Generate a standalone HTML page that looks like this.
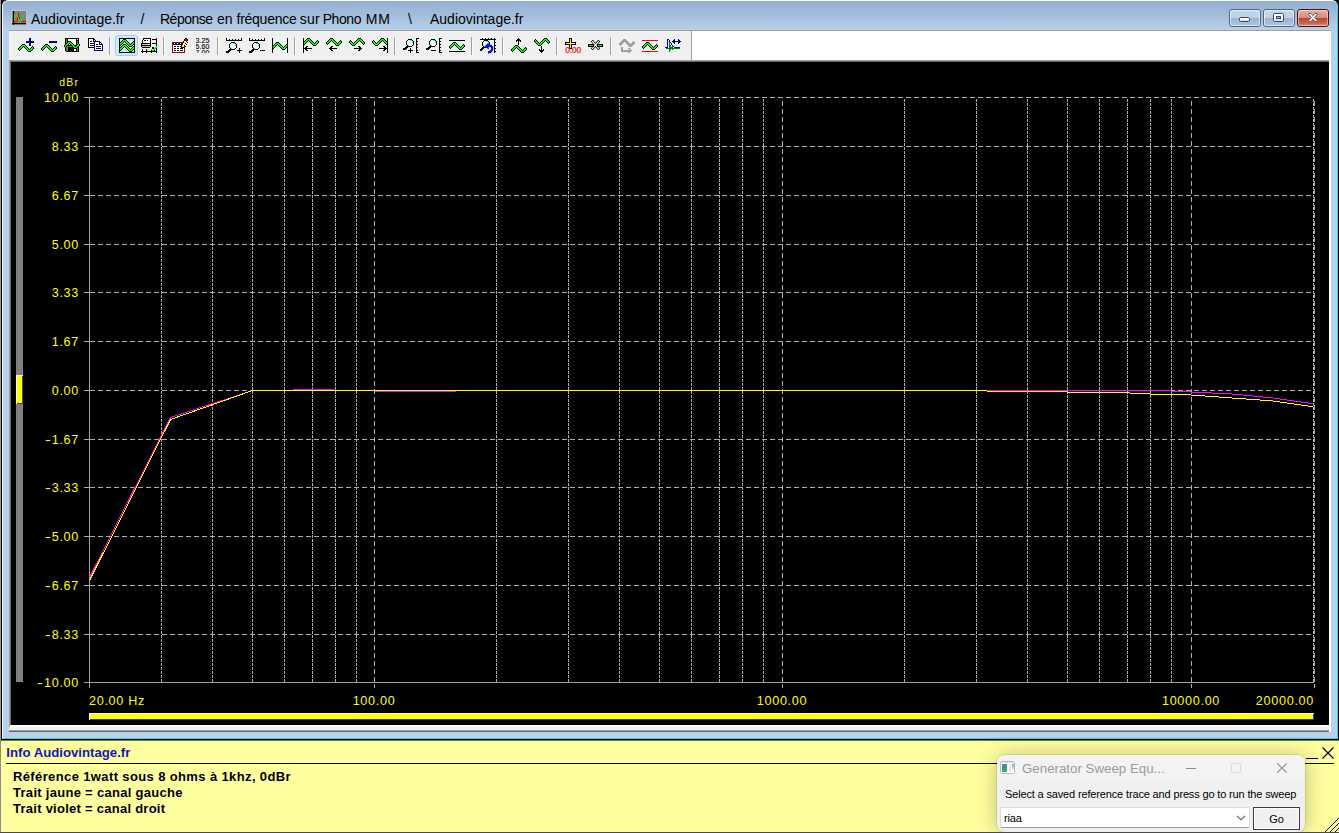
<!DOCTYPE html>
<html lang="fr">
<head>
<meta charset="utf-8">
<title>Audiovintage.fr / Réponse en fréquence sur Phono MM \ Audiovintage.fr</title>
<style>
html,body{margin:0;padding:0;}
body{width:1339px;height:833px;overflow:hidden;position:relative;background:#ffffa0;font-family:"Liberation Sans",sans-serif;}
.abs{position:absolute;}
#winbg{position:absolute;left:0;top:0;width:1339px;height:740px;background:#000;}
#winedgeL{position:absolute;left:0;top:0;width:1px;height:740px;background:#9a9a9a;}
#topwhite{display:none}
#frame{display:none}
#frame2{position:absolute;left:2px;top:0;width:1336px;height:739px;box-sizing:border-box;background:#b9d1ea;border-radius:6px 6px 0 0;border-left:1px solid #f6fafd;border-top:1px solid #fdfeff;border-right:1px solid #35d4ee;border-bottom:1px solid #35d4ee;}
#frame3{display:none}
#titlegrad{position:absolute;left:3px;top:1px;width:1334px;height:30px;background:linear-gradient(#94afd1 0%,#a2bcdb 45%,#b9d1ea 100%);border-radius:5px 5px 0 0;}
.tt{position:absolute;top:9px;height:20px;line-height:20px;font-size:14px;color:#000;white-space:pre;}
#tbline{position:absolute;left:9px;top:30px;width:1322px;height:1px;background:#a0a0a0;}
#toolbar{position:absolute;left:9px;top:31px;width:682px;height:30px;background:#f0f0f0;}
#tbend{position:absolute;left:691px;top:31px;width:1px;height:30px;background:#a0a0a0;}
#tbwhite{position:absolute;left:692px;top:31px;width:639px;height:31px;background:#fff;}
#chartedge{position:absolute;left:9px;top:60px;width:1322px;height:672px;box-sizing:border-box;background:#fff;}
#chart{position:absolute;left:11px;top:62px;width:1318px;height:663px;background:#000;}
.yl{position:absolute;left:19px;width:60px;text-align:right;color:#ffff00;font-size:12.6px;line-height:14px;height:14px;letter-spacing:0.7px;white-space:pre;}
.xl{position:absolute;top:694px;color:#ffff00;font-size:12.6px;line-height:14px;height:14px;letter-spacing:0.7px;white-space:pre;}
#info{position:absolute;left:1px;top:740px;width:1338px;height:93px;background:#ffffa0;}
#infoL{position:absolute;left:0;top:740px;width:1px;height:93px;background:#8c8c8c;}
.il{position:absolute;left:13px;font-weight:bold;font-size:13px;line-height:16px;color:#000;letter-spacing:0.55px;white-space:pre;}
#pop{position:absolute;left:997px;top:755px;width:308px;height:77px;background:#f0f0f0;border-radius:8px;box-shadow:0 0 0 1px rgba(110,110,60,0.16),0 1px 22px rgba(0,0,0,0.27);overflow:hidden;}
#botline{position:absolute;left:0;top:832px;width:1339px;height:1px;background:#4a4a4a;}
</style>
</head>
<body>
<div id="winbg"></div>
<div id="winedgeL"></div>
<div id="topwhite"></div>
<div id="frame"></div>
<div id="frame2"></div>
<div id="frame3"></div>
<div id="titlegrad"></div>
<svg class="abs" style="left:0;top:0" width="1339" height="32" shape-rendering="crispEdges"><rect x="11" y="10" width="16" height="1" fill="#c3c3c3"/><rect x="11" y="11" width="1" height="1" fill="#c3c3c3"/><rect x="12" y="11" width="1" height="1" fill="#808080"/><rect x="13" y="11" width="1" height="1" fill="#000"/><rect x="14" y="11" width="12" height="1" fill="#808080"/><rect x="26" y="11" width="1" height="1" fill="#c3c3c3"/><rect x="11" y="12" width="1" height="1" fill="#c3c3c3"/><rect x="12" y="12" width="1" height="1" fill="#808080"/><rect x="13" y="12" width="1" height="1" fill="#000"/><rect x="14" y="12" width="12" height="1" fill="#808080"/><rect x="26" y="12" width="1" height="1" fill="#c3c3c3"/><rect x="11" y="13" width="1" height="1" fill="#c3c3c3"/><rect x="12" y="13" width="1" height="1" fill="#808080"/><rect x="13" y="13" width="1" height="1" fill="#000"/><rect x="14" y="13" width="4" height="1" fill="#808080"/><rect x="18" y="13" width="1" height="1" fill="#ff0000"/><rect x="19" y="13" width="7" height="1" fill="#808080"/><rect x="26" y="13" width="1" height="1" fill="#c3c3c3"/><rect x="11" y="14" width="1" height="1" fill="#c3c3c3"/><rect x="12" y="14" width="1" height="1" fill="#808080"/><rect x="13" y="14" width="1" height="1" fill="#000"/><rect x="14" y="14" width="2" height="1" fill="#808080"/><rect x="16" y="14" width="1" height="1" fill="#00ff00"/><rect x="17" y="14" width="1" height="1" fill="#808080"/><rect x="18" y="14" width="1" height="1" fill="#ff0000"/><rect x="19" y="14" width="5" height="1" fill="#808080"/><rect x="24" y="14" width="1" height="1" fill="#00ff00"/><rect x="25" y="14" width="1" height="1" fill="#808080"/><rect x="26" y="14" width="1" height="1" fill="#c3c3c3"/><rect x="11" y="15" width="1" height="1" fill="#c3c3c3"/><rect x="12" y="15" width="1" height="1" fill="#808080"/><rect x="13" y="15" width="1" height="1" fill="#000"/><rect x="14" y="15" width="1" height="1" fill="#808080"/><rect x="15" y="15" width="1" height="1" fill="#00ff00"/><rect x="16" y="15" width="1" height="1" fill="#808080"/><rect x="17" y="15" width="1" height="1" fill="#00ff00"/><rect x="18" y="15" width="1" height="1" fill="#ff0000"/><rect x="19" y="15" width="4" height="1" fill="#808080"/><rect x="23" y="15" width="1" height="1" fill="#00ff00"/><rect x="24" y="15" width="2" height="1" fill="#808080"/><rect x="26" y="15" width="1" height="1" fill="#c3c3c3"/><rect x="11" y="16" width="1" height="1" fill="#c3c3c3"/><rect x="12" y="16" width="1" height="1" fill="#808080"/><rect x="13" y="16" width="1" height="1" fill="#000"/><rect x="14" y="16" width="1" height="1" fill="#808080"/><rect x="15" y="16" width="1" height="1" fill="#00ff00"/><rect x="16" y="16" width="1" height="1" fill="#808080"/><rect x="17" y="16" width="1" height="1" fill="#00ff00"/><rect x="18" y="16" width="1" height="1" fill="#ff0000"/><rect x="19" y="16" width="4" height="1" fill="#808080"/><rect x="23" y="16" width="1" height="1" fill="#00ff00"/><rect x="24" y="16" width="2" height="1" fill="#808080"/><rect x="26" y="16" width="1" height="1" fill="#c3c3c3"/><rect x="11" y="17" width="1" height="1" fill="#c3c3c3"/><rect x="12" y="17" width="1" height="1" fill="#808080"/><rect x="13" y="17" width="1" height="1" fill="#000"/><rect x="14" y="17" width="1" height="1" fill="#00ff00"/><rect x="15" y="17" width="2" height="1" fill="#808080"/><rect x="17" y="17" width="1" height="1" fill="#ff0000"/><rect x="18" y="17" width="1" height="1" fill="#00ff00"/><rect x="19" y="17" width="1" height="1" fill="#ff0000"/><rect x="20" y="17" width="2" height="1" fill="#808080"/><rect x="22" y="17" width="1" height="1" fill="#00ff00"/><rect x="23" y="17" width="3" height="1" fill="#808080"/><rect x="26" y="17" width="1" height="1" fill="#c3c3c3"/><rect x="11" y="18" width="1" height="1" fill="#c3c3c3"/><rect x="12" y="18" width="1" height="1" fill="#808080"/><rect x="13" y="18" width="1" height="1" fill="#000"/><rect x="14" y="18" width="1" height="1" fill="#00ff00"/><rect x="15" y="18" width="2" height="1" fill="#808080"/><rect x="17" y="18" width="1" height="1" fill="#ff0000"/><rect x="18" y="18" width="1" height="1" fill="#00ff00"/><rect x="19" y="18" width="1" height="1" fill="#ff0000"/><rect x="20" y="18" width="2" height="1" fill="#808080"/><rect x="22" y="18" width="1" height="1" fill="#00ff00"/><rect x="23" y="18" width="3" height="1" fill="#808080"/><rect x="26" y="18" width="1" height="1" fill="#c3c3c3"/><rect x="11" y="19" width="1" height="1" fill="#c3c3c3"/><rect x="12" y="19" width="1" height="1" fill="#808080"/><rect x="13" y="19" width="1" height="1" fill="#000"/><rect x="14" y="19" width="3" height="1" fill="#808080"/><rect x="17" y="19" width="1" height="1" fill="#ff0000"/><rect x="18" y="19" width="1" height="1" fill="#808080"/><rect x="19" y="19" width="1" height="1" fill="#00ff00"/><rect x="20" y="19" width="1" height="1" fill="#808080"/><rect x="21" y="19" width="1" height="1" fill="#00ff00"/><rect x="22" y="19" width="4" height="1" fill="#808080"/><rect x="26" y="19" width="1" height="1" fill="#c3c3c3"/><rect x="11" y="20" width="1" height="1" fill="#c3c3c3"/><rect x="12" y="20" width="1" height="1" fill="#808080"/><rect x="13" y="20" width="1" height="1" fill="#000"/><rect x="14" y="20" width="3" height="1" fill="#808080"/><rect x="17" y="20" width="1" height="1" fill="#ff0000"/><rect x="18" y="20" width="1" height="1" fill="#808080"/><rect x="19" y="20" width="1" height="1" fill="#00ff00"/><rect x="20" y="20" width="1" height="1" fill="#808080"/><rect x="21" y="20" width="1" height="1" fill="#00ff00"/><rect x="22" y="20" width="4" height="1" fill="#808080"/><rect x="26" y="20" width="1" height="1" fill="#c3c3c3"/><rect x="11" y="21" width="1" height="1" fill="#c3c3c3"/><rect x="12" y="21" width="1" height="1" fill="#808080"/><rect x="13" y="21" width="1" height="1" fill="#000"/><rect x="14" y="21" width="3" height="1" fill="#ff0000"/><rect x="17" y="21" width="3" height="1" fill="#808080"/><rect x="20" y="21" width="1" height="1" fill="#00ff00"/><rect x="21" y="21" width="5" height="1" fill="#ff0000"/><rect x="26" y="21" width="1" height="1" fill="#c3c3c3"/><rect x="11" y="22" width="1" height="1" fill="#c3c3c3"/><rect x="12" y="22" width="1" height="1" fill="#808080"/><rect x="13" y="22" width="1" height="1" fill="#000"/><rect x="14" y="22" width="12" height="1" fill="#808080"/><rect x="26" y="22" width="1" height="1" fill="#c3c3c3"/><rect x="11" y="23" width="1" height="1" fill="#c3c3c3"/><rect x="12" y="23" width="14" height="1" fill="#000"/><rect x="26" y="23" width="1" height="1" fill="#c3c3c3"/><rect x="11" y="24" width="1" height="1" fill="#c3c3c3"/><rect x="12" y="24" width="1" height="1" fill="#808080"/><rect x="13" y="24" width="1" height="1" fill="#000"/><rect x="14" y="24" width="12" height="1" fill="#808080"/><rect x="26" y="24" width="1" height="1" fill="#c3c3c3"/><rect x="11" y="25" width="16" height="1" fill="#c3c3c3"/></svg>
<div class="tt" id="t1" style="left:31px">Audiovintage.fr</div>
<div class="tt" id="t2" style="left:140.5px">/</div>
<div class="tt" id="t3" style="left:0;width:420px"><span style="position:absolute;left:160.0px;top:0;letter-spacing:-0.5px">Réponse</span> <span style="position:absolute;left:216.9px;top:0;letter-spacing:0px">en</span> <span style="position:absolute;left:236.5px;top:0;letter-spacing:-0.25px">fréquence</span> <span style="position:absolute;left:299.7px;top:0;letter-spacing:0.27px">sur</span> <span style="position:absolute;left:322.7px;top:0;letter-spacing:-0.42px">Phono</span> <span style="position:absolute;left:365.7px;top:0;letter-spacing:0.85px">MM</span></div>
<div class="tt" id="t4" style="left:408px">\</div>
<div class="tt" id="t5" style="left:430px">Audiovintage.fr</div>
<div style="position:absolute;top:9px;width:32px;height:18px;box-sizing:border-box;border:1px solid #54657f;border-radius:3px;left:1229px;background:linear-gradient(#c3d6ec 0%,#bdd2ea 47%,#9cb6d5 50%,#a9c3e1 100%);"><div style="position:absolute;left:0;top:0;right:0;bottom:0;border:1px solid rgba(255,255,255,0.55);border-radius:2px;"></div></div>
<div style="position:absolute;top:9px;width:32px;height:18px;box-sizing:border-box;border:1px solid #54657f;border-radius:3px;left:1263px;background:linear-gradient(#c3d6ec 0%,#bdd2ea 47%,#9cb6d5 50%,#a9c3e1 100%);"><div style="position:absolute;left:0;top:0;right:0;bottom:0;border:1px solid rgba(255,255,255,0.55);border-radius:2px;"></div></div>
<div style="position:absolute;top:9px;width:32px;height:18px;box-sizing:border-box;border:1px solid #54657f;border-radius:3px;left:1297px;border-color:#47141b;background:linear-gradient(#e9b3a5 0%,#d98c79 47%,#c0412a 50%,#cc6a52 85%,#d9907a 100%);"><div style="position:absolute;left:0;top:0;right:0;bottom:0;border:1px solid rgba(255,255,255,0.55);border-radius:2px;border-color:rgba(255,220,210,0.55)"></div></div>
<svg class="abs" style="left:0;top:0" width="1339" height="32">
<rect x="1239.5" y="17.5" width="10" height="4" rx="1" fill="#fff" stroke="#3d4962" stroke-width="1"/>
<rect x="1240" y="20" width="9" height="1" fill="#dcdcdc"/>
<rect x="1273.5" y="13.5" width="10" height="8" rx="1" fill="#fff" stroke="#3d4962" stroke-width="1"/>
<rect x="1274" y="19" width="9" height="2" fill="#e4e4e4"/>
<rect x="1276.5" y="16.5" width="4" height="2" fill="#9cc0e8" stroke="#3d4962" stroke-width="1"/>
<path d="M1308.5 13.5 L1311 13.5 L1313 15.7 L1315 13.5 L1317.5 13.5 L1317.5 14.3 L1314.7 17.5 L1317.5 20.7 L1317.5 21.5 L1315 21.5 L1313 19.3 L1311 21.5 L1308.5 21.5 L1308.5 20.7 L1311.3 17.5 L1308.5 14.3 Z" fill="#fff" stroke="#5a5e72" stroke-width="1" stroke-linejoin="round"/>
</svg>
<div id="tbline"></div>
<div id="toolbar"></div>
<div id="tbend"></div>
<div id="tbwhite"></div>
<svg class="abs" style="left:0;top:0" width="700" height="62" viewBox="0 0 700 62" shape-rendering="crispEdges"><rect x="109" y="37" width="1" height="18" fill="#a0a0a0"/><rect x="110" y="37" width="1" height="18" fill="#fafafa"/>
<rect x="163" y="37" width="1" height="18" fill="#a0a0a0"/><rect x="164" y="37" width="1" height="18" fill="#fafafa"/>
<rect x="217" y="37" width="1" height="18" fill="#a0a0a0"/><rect x="218" y="37" width="1" height="18" fill="#fafafa"/>
<rect x="294" y="37" width="1" height="18" fill="#a0a0a0"/><rect x="295" y="37" width="1" height="18" fill="#fafafa"/>
<rect x="394" y="37" width="1" height="18" fill="#a0a0a0"/><rect x="395" y="37" width="1" height="18" fill="#fafafa"/>
<rect x="471" y="37" width="1" height="18" fill="#a0a0a0"/><rect x="472" y="37" width="1" height="18" fill="#fafafa"/>
<rect x="502" y="37" width="1" height="18" fill="#a0a0a0"/><rect x="503" y="37" width="1" height="18" fill="#fafafa"/>
<rect x="556" y="37" width="1" height="18" fill="#a0a0a0"/><rect x="557" y="37" width="1" height="18" fill="#fafafa"/>
<rect x="610" y="37" width="1" height="18" fill="#a0a0a0"/><rect x="611" y="37" width="1" height="18" fill="#fafafa"/>
<rect x="22" y="44" width="3" height="1" fill="#000"/><rect x="21" y="45" width="1" height="1" fill="#000"/><rect x="22" y="45" width="3" height="1" fill="#00ff00"/><rect x="25" y="45" width="1" height="1" fill="#000"/><rect x="20" y="46" width="1" height="1" fill="#000"/><rect x="21" y="46" width="2" height="1" fill="#00ff00"/><rect x="23" y="46" width="1" height="1" fill="#000"/><rect x="24" y="46" width="2" height="1" fill="#00ff00"/><rect x="26" y="46" width="1" height="1" fill="#000"/><rect x="32" y="46" width="1" height="1" fill="#000"/><rect x="19" y="47" width="1" height="1" fill="#000"/><rect x="20" y="47" width="2" height="1" fill="#00ff00"/><rect x="22" y="47" width="1" height="1" fill="#000"/><rect x="24" y="47" width="1" height="1" fill="#000"/><rect x="25" y="47" width="2" height="1" fill="#00ff00"/><rect x="27" y="47" width="1" height="1" fill="#000"/><rect x="31" y="47" width="1" height="1" fill="#000"/><rect x="32" y="47" width="1" height="1" fill="#00ff00"/><rect x="33" y="47" width="1" height="1" fill="#000"/><rect x="18" y="48" width="1" height="1" fill="#000"/><rect x="19" y="48" width="2" height="1" fill="#00ff00"/><rect x="21" y="48" width="1" height="1" fill="#000"/><rect x="25" y="48" width="1" height="1" fill="#000"/><rect x="26" y="48" width="2" height="1" fill="#00ff00"/><rect x="28" y="48" width="1" height="1" fill="#000"/><rect x="30" y="48" width="1" height="1" fill="#000"/><rect x="31" y="48" width="2" height="1" fill="#00ff00"/><rect x="33" y="48" width="1" height="1" fill="#000"/><rect x="18" y="49" width="1" height="1" fill="#000"/><rect x="19" y="49" width="1" height="1" fill="#00ff00"/><rect x="20" y="49" width="1" height="1" fill="#000"/><rect x="26" y="49" width="1" height="1" fill="#000"/><rect x="27" y="49" width="2" height="1" fill="#00ff00"/><rect x="29" y="49" width="1" height="1" fill="#000"/><rect x="30" y="49" width="2" height="1" fill="#00ff00"/><rect x="32" y="49" width="1" height="1" fill="#000"/><rect x="19" y="50" width="1" height="1" fill="#000"/><rect x="27" y="50" width="1" height="1" fill="#000"/><rect x="28" y="50" width="3" height="1" fill="#00ff00"/><rect x="31" y="50" width="1" height="1" fill="#000"/><rect x="28" y="51" width="3" height="1" fill="#000"/>
<rect x="29" y="38" width="1" height="1" fill="#0000ff"/><rect x="30" y="38" width="1" height="1" fill="#000"/><rect x="29" y="39" width="1" height="1" fill="#0000ff"/><rect x="30" y="39" width="1" height="1" fill="#000"/><rect x="29" y="40" width="1" height="1" fill="#0000ff"/><rect x="30" y="40" width="1" height="1" fill="#000"/><rect x="26" y="41" width="7" height="1" fill="#0000ff"/><rect x="33" y="41" width="1" height="1" fill="#000"/><rect x="26" y="42" width="3" height="1" fill="#000"/><rect x="29" y="42" width="1" height="1" fill="#0000ff"/><rect x="30" y="42" width="4" height="1" fill="#000"/><rect x="29" y="43" width="1" height="1" fill="#0000ff"/><rect x="30" y="43" width="1" height="1" fill="#000"/><rect x="29" y="44" width="1" height="1" fill="#0000ff"/><rect x="30" y="44" width="1" height="1" fill="#000"/><rect x="29" y="45" width="2" height="1" fill="#000"/>
<rect x="45" y="44" width="3" height="1" fill="#000"/><rect x="44" y="45" width="1" height="1" fill="#000"/><rect x="45" y="45" width="3" height="1" fill="#00ff00"/><rect x="48" y="45" width="1" height="1" fill="#000"/><rect x="43" y="46" width="1" height="1" fill="#000"/><rect x="44" y="46" width="2" height="1" fill="#00ff00"/><rect x="46" y="46" width="1" height="1" fill="#000"/><rect x="47" y="46" width="2" height="1" fill="#00ff00"/><rect x="49" y="46" width="1" height="1" fill="#000"/><rect x="55" y="46" width="1" height="1" fill="#000"/><rect x="42" y="47" width="1" height="1" fill="#000"/><rect x="43" y="47" width="2" height="1" fill="#00ff00"/><rect x="45" y="47" width="1" height="1" fill="#000"/><rect x="47" y="47" width="1" height="1" fill="#000"/><rect x="48" y="47" width="2" height="1" fill="#00ff00"/><rect x="50" y="47" width="1" height="1" fill="#000"/><rect x="54" y="47" width="1" height="1" fill="#000"/><rect x="55" y="47" width="1" height="1" fill="#00ff00"/><rect x="56" y="47" width="1" height="1" fill="#000"/><rect x="41" y="48" width="1" height="1" fill="#000"/><rect x="42" y="48" width="2" height="1" fill="#00ff00"/><rect x="44" y="48" width="1" height="1" fill="#000"/><rect x="48" y="48" width="1" height="1" fill="#000"/><rect x="49" y="48" width="2" height="1" fill="#00ff00"/><rect x="51" y="48" width="1" height="1" fill="#000"/><rect x="53" y="48" width="1" height="1" fill="#000"/><rect x="54" y="48" width="2" height="1" fill="#00ff00"/><rect x="56" y="48" width="1" height="1" fill="#000"/><rect x="41" y="49" width="1" height="1" fill="#000"/><rect x="42" y="49" width="1" height="1" fill="#00ff00"/><rect x="43" y="49" width="1" height="1" fill="#000"/><rect x="49" y="49" width="1" height="1" fill="#000"/><rect x="50" y="49" width="2" height="1" fill="#00ff00"/><rect x="52" y="49" width="1" height="1" fill="#000"/><rect x="53" y="49" width="2" height="1" fill="#00ff00"/><rect x="55" y="49" width="1" height="1" fill="#000"/><rect x="42" y="50" width="1" height="1" fill="#000"/><rect x="50" y="50" width="1" height="1" fill="#000"/><rect x="51" y="50" width="3" height="1" fill="#00ff00"/><rect x="54" y="50" width="1" height="1" fill="#000"/><rect x="51" y="51" width="3" height="1" fill="#000"/>
<rect x="49" y="41" width="7" height="1" fill="#0000ff"/><rect x="56" y="41" width="1" height="1" fill="#000"/><rect x="49" y="42" width="8" height="1" fill="#000"/>
<rect x="65" y="38" width="14" height="1" fill="#000"/><rect x="65" y="39" width="1" height="1" fill="#000"/><rect x="66" y="39" width="1" height="1" fill="#808000"/><rect x="67" y="39" width="1" height="1" fill="#000"/><rect x="68" y="39" width="8" height="1" fill="#fff"/><rect x="76" y="39" width="1" height="1" fill="#000"/><rect x="77" y="39" width="1" height="1" fill="#fff"/><rect x="78" y="39" width="1" height="1" fill="#000"/><rect x="65" y="40" width="1" height="1" fill="#000"/><rect x="66" y="40" width="1" height="1" fill="#808000"/><rect x="67" y="40" width="1" height="1" fill="#000"/><rect x="68" y="40" width="8" height="1" fill="#fff"/><rect x="76" y="40" width="3" height="1" fill="#000"/><rect x="65" y="41" width="1" height="1" fill="#000"/><rect x="66" y="41" width="1" height="1" fill="#808000"/><rect x="67" y="41" width="1" height="1" fill="#000"/><rect x="68" y="41" width="8" height="1" fill="#fff"/><rect x="76" y="41" width="1" height="1" fill="#000"/><rect x="77" y="41" width="1" height="1" fill="#808000"/><rect x="78" y="41" width="1" height="1" fill="#000"/><rect x="65" y="42" width="1" height="1" fill="#000"/><rect x="66" y="42" width="1" height="1" fill="#808000"/><rect x="67" y="42" width="1" height="1" fill="#000"/><rect x="68" y="42" width="8" height="1" fill="#fff"/><rect x="76" y="42" width="1" height="1" fill="#000"/><rect x="77" y="42" width="1" height="1" fill="#808000"/><rect x="78" y="42" width="1" height="1" fill="#000"/><rect x="65" y="43" width="1" height="1" fill="#000"/><rect x="66" y="43" width="1" height="1" fill="#808000"/><rect x="67" y="43" width="1" height="1" fill="#000"/><rect x="68" y="43" width="8" height="1" fill="#fff"/><rect x="76" y="43" width="1" height="1" fill="#000"/><rect x="77" y="43" width="1" height="1" fill="#808000"/><rect x="78" y="43" width="1" height="1" fill="#000"/><rect x="65" y="44" width="1" height="1" fill="#000"/><rect x="66" y="44" width="1" height="1" fill="#808000"/><rect x="67" y="44" width="1" height="1" fill="#000"/><rect x="68" y="44" width="8" height="1" fill="#fff"/><rect x="76" y="44" width="1" height="1" fill="#000"/><rect x="77" y="44" width="1" height="1" fill="#808000"/><rect x="78" y="44" width="1" height="1" fill="#000"/><rect x="65" y="45" width="1" height="1" fill="#000"/><rect x="66" y="45" width="1" height="1" fill="#808000"/><rect x="67" y="45" width="10" height="1" fill="#000"/><rect x="77" y="45" width="1" height="1" fill="#808000"/><rect x="78" y="45" width="1" height="1" fill="#000"/><rect x="65" y="46" width="1" height="1" fill="#000"/><rect x="66" y="46" width="6" height="1" fill="#808000"/><rect x="72" y="46" width="5" height="1" fill="#000"/><rect x="77" y="46" width="1" height="1" fill="#808000"/><rect x="78" y="46" width="1" height="1" fill="#000"/><rect x="65" y="47" width="1" height="1" fill="#000"/><rect x="66" y="47" width="2" height="1" fill="#808000"/><rect x="68" y="47" width="9" height="1" fill="#000"/><rect x="77" y="47" width="1" height="1" fill="#808000"/><rect x="78" y="47" width="1" height="1" fill="#000"/><rect x="65" y="48" width="1" height="1" fill="#000"/><rect x="66" y="48" width="2" height="1" fill="#808000"/><rect x="68" y="48" width="9" height="1" fill="#000"/><rect x="77" y="48" width="1" height="1" fill="#808000"/><rect x="78" y="48" width="1" height="1" fill="#000"/><rect x="65" y="49" width="1" height="1" fill="#000"/><rect x="66" y="49" width="2" height="1" fill="#808000"/><rect x="68" y="49" width="6" height="1" fill="#000"/><rect x="74" y="49" width="2" height="1" fill="#fff"/><rect x="76" y="49" width="1" height="1" fill="#000"/><rect x="77" y="49" width="1" height="1" fill="#808000"/><rect x="78" y="49" width="1" height="1" fill="#000"/><rect x="65" y="50" width="1" height="1" fill="#000"/><rect x="66" y="50" width="2" height="1" fill="#808000"/><rect x="68" y="50" width="6" height="1" fill="#000"/><rect x="74" y="50" width="2" height="1" fill="#fff"/><rect x="76" y="50" width="1" height="1" fill="#000"/><rect x="77" y="50" width="1" height="1" fill="#808000"/><rect x="78" y="50" width="1" height="1" fill="#000"/><rect x="66" y="51" width="13" height="1" fill="#000"/>
<rect x="68" y="41" width="3" height="1" fill="#000"/><rect x="67" y="42" width="1" height="1" fill="#000"/><rect x="68" y="42" width="3" height="1" fill="#00ff00"/><rect x="71" y="42" width="1" height="1" fill="#000"/><rect x="66" y="43" width="1" height="1" fill="#000"/><rect x="67" y="43" width="2" height="1" fill="#00ff00"/><rect x="69" y="43" width="1" height="1" fill="#000"/><rect x="70" y="43" width="2" height="1" fill="#00ff00"/><rect x="72" y="43" width="1" height="1" fill="#000"/><rect x="78" y="43" width="1" height="1" fill="#000"/><rect x="65" y="44" width="1" height="1" fill="#000"/><rect x="66" y="44" width="2" height="1" fill="#00ff00"/><rect x="68" y="44" width="1" height="1" fill="#000"/><rect x="70" y="44" width="1" height="1" fill="#000"/><rect x="71" y="44" width="2" height="1" fill="#00ff00"/><rect x="73" y="44" width="1" height="1" fill="#000"/><rect x="77" y="44" width="1" height="1" fill="#000"/><rect x="78" y="44" width="1" height="1" fill="#00ff00"/><rect x="79" y="44" width="1" height="1" fill="#000"/><rect x="64" y="45" width="1" height="1" fill="#000"/><rect x="65" y="45" width="2" height="1" fill="#00ff00"/><rect x="67" y="45" width="1" height="1" fill="#000"/><rect x="71" y="45" width="1" height="1" fill="#000"/><rect x="72" y="45" width="2" height="1" fill="#00ff00"/><rect x="74" y="45" width="1" height="1" fill="#000"/><rect x="76" y="45" width="1" height="1" fill="#000"/><rect x="77" y="45" width="2" height="1" fill="#00ff00"/><rect x="79" y="45" width="1" height="1" fill="#000"/><rect x="64" y="46" width="1" height="1" fill="#000"/><rect x="65" y="46" width="1" height="1" fill="#00ff00"/><rect x="66" y="46" width="1" height="1" fill="#000"/><rect x="72" y="46" width="1" height="1" fill="#000"/><rect x="73" y="46" width="2" height="1" fill="#00ff00"/><rect x="75" y="46" width="1" height="1" fill="#000"/><rect x="76" y="46" width="2" height="1" fill="#00ff00"/><rect x="78" y="46" width="1" height="1" fill="#000"/><rect x="65" y="47" width="1" height="1" fill="#000"/><rect x="73" y="47" width="1" height="1" fill="#000"/><rect x="74" y="47" width="3" height="1" fill="#00ff00"/><rect x="77" y="47" width="1" height="1" fill="#000"/><rect x="74" y="48" width="3" height="1" fill="#000"/>
<rect x="88" y="38" width="6" height="1" fill="#000"/><rect x="88" y="39" width="1" height="1" fill="#000"/><rect x="89" y="39" width="4" height="1" fill="#fff"/><rect x="93" y="39" width="2" height="1" fill="#000"/><rect x="88" y="40" width="1" height="1" fill="#000"/><rect x="89" y="40" width="4" height="1" fill="#fff"/><rect x="93" y="40" width="1" height="1" fill="#000"/><rect x="94" y="40" width="1" height="1" fill="#fff"/><rect x="95" y="40" width="1" height="1" fill="#000"/><rect x="88" y="41" width="1" height="1" fill="#000"/><rect x="89" y="41" width="1" height="1" fill="#fff"/><rect x="90" y="41" width="2" height="1" fill="#000"/><rect x="92" y="41" width="1" height="1" fill="#fff"/><rect x="93" y="41" width="3" height="1" fill="#000"/><rect x="88" y="42" width="1" height="1" fill="#000"/><rect x="89" y="42" width="6" height="1" fill="#fff"/><rect x="95" y="42" width="1" height="1" fill="#000"/><rect x="88" y="43" width="1" height="1" fill="#000"/><rect x="89" y="43" width="1" height="1" fill="#fff"/><rect x="90" y="43" width="4" height="1" fill="#000"/><rect x="94" y="43" width="1" height="1" fill="#fff"/><rect x="95" y="43" width="1" height="1" fill="#000"/><rect x="88" y="44" width="1" height="1" fill="#000"/><rect x="89" y="44" width="6" height="1" fill="#fff"/><rect x="95" y="44" width="1" height="1" fill="#000"/><rect x="88" y="45" width="1" height="1" fill="#000"/><rect x="89" y="45" width="1" height="1" fill="#fff"/><rect x="90" y="45" width="4" height="1" fill="#000"/><rect x="94" y="45" width="1" height="1" fill="#fff"/><rect x="95" y="45" width="1" height="1" fill="#000"/><rect x="88" y="46" width="1" height="1" fill="#000"/><rect x="89" y="46" width="6" height="1" fill="#fff"/><rect x="95" y="46" width="1" height="1" fill="#000"/><rect x="88" y="47" width="8" height="1" fill="#000"/>
<rect x="94" y="41" width="6" height="1" fill="#000080"/><rect x="94" y="42" width="1" height="1" fill="#000080"/><rect x="95" y="42" width="4" height="1" fill="#fff"/><rect x="99" y="42" width="2" height="1" fill="#000080"/><rect x="94" y="43" width="1" height="1" fill="#000080"/><rect x="95" y="43" width="4" height="1" fill="#fff"/><rect x="99" y="43" width="1" height="1" fill="#000080"/><rect x="100" y="43" width="1" height="1" fill="#fff"/><rect x="101" y="43" width="1" height="1" fill="#000080"/><rect x="94" y="44" width="1" height="1" fill="#000080"/><rect x="95" y="44" width="1" height="1" fill="#fff"/><rect x="96" y="44" width="2" height="1" fill="#000"/><rect x="98" y="44" width="1" height="1" fill="#fff"/><rect x="99" y="44" width="4" height="1" fill="#000080"/><rect x="94" y="45" width="1" height="1" fill="#000080"/><rect x="95" y="45" width="7" height="1" fill="#fff"/><rect x="102" y="45" width="1" height="1" fill="#000080"/><rect x="94" y="46" width="1" height="1" fill="#000080"/><rect x="95" y="46" width="1" height="1" fill="#fff"/><rect x="96" y="46" width="5" height="1" fill="#000"/><rect x="101" y="46" width="1" height="1" fill="#fff"/><rect x="102" y="46" width="1" height="1" fill="#000080"/><rect x="94" y="47" width="1" height="1" fill="#000080"/><rect x="95" y="47" width="7" height="1" fill="#fff"/><rect x="102" y="47" width="1" height="1" fill="#000080"/><rect x="94" y="48" width="1" height="1" fill="#000080"/><rect x="95" y="48" width="1" height="1" fill="#fff"/><rect x="96" y="48" width="5" height="1" fill="#000"/><rect x="101" y="48" width="1" height="1" fill="#fff"/><rect x="102" y="48" width="1" height="1" fill="#000080"/><rect x="94" y="49" width="1" height="1" fill="#000080"/><rect x="95" y="49" width="7" height="1" fill="#fff"/><rect x="102" y="49" width="1" height="1" fill="#000080"/><rect x="94" y="50" width="9" height="1" fill="#000080"/>
<rect x="115.5" y="35.5" width="22" height="20" rx="2" fill="#cce8ff" stroke="#99d1ff" stroke-width="1" shape-rendering="auto"/>
<rect x="119" y="38" width="16" height="1" fill="#000"/><rect x="119" y="52" width="16" height="1" fill="#000"/><rect x="119" y="38" width="1" height="15" fill="#000"/><rect x="134" y="38" width="1" height="15" fill="#000"/>
<rect x="123" y="39" width="3" height="1" fill="#000"/><rect x="122" y="40" width="1" height="1" fill="#000"/><rect x="123" y="40" width="3" height="1" fill="#00ff00"/><rect x="126" y="40" width="1" height="1" fill="#000"/><rect x="121" y="41" width="1" height="1" fill="#000"/><rect x="122" y="41" width="2" height="1" fill="#00ff00"/><rect x="124" y="41" width="1" height="1" fill="#000"/><rect x="125" y="41" width="2" height="1" fill="#00ff00"/><rect x="127" y="41" width="1" height="1" fill="#000"/><rect x="133" y="41" width="1" height="1" fill="#000"/><rect x="120" y="42" width="1" height="1" fill="#000"/><rect x="121" y="42" width="2" height="1" fill="#00ff00"/><rect x="123" y="42" width="1" height="1" fill="#000"/><rect x="125" y="42" width="1" height="1" fill="#000"/><rect x="126" y="42" width="2" height="1" fill="#00ff00"/><rect x="128" y="42" width="1" height="1" fill="#000"/><rect x="132" y="42" width="1" height="1" fill="#000"/><rect x="133" y="42" width="1" height="1" fill="#00ff00"/><rect x="134" y="42" width="1" height="1" fill="#000"/><rect x="119" y="43" width="1" height="1" fill="#000"/><rect x="120" y="43" width="2" height="1" fill="#00ff00"/><rect x="122" y="43" width="1" height="1" fill="#000"/><rect x="126" y="43" width="1" height="1" fill="#000"/><rect x="127" y="43" width="2" height="1" fill="#00ff00"/><rect x="129" y="43" width="1" height="1" fill="#000"/><rect x="131" y="43" width="1" height="1" fill="#000"/><rect x="132" y="43" width="2" height="1" fill="#00ff00"/><rect x="134" y="43" width="1" height="1" fill="#000"/><rect x="119" y="44" width="1" height="1" fill="#000"/><rect x="120" y="44" width="1" height="1" fill="#00ff00"/><rect x="121" y="44" width="1" height="1" fill="#000"/><rect x="127" y="44" width="1" height="1" fill="#000"/><rect x="128" y="44" width="2" height="1" fill="#00ff00"/><rect x="130" y="44" width="1" height="1" fill="#000"/><rect x="131" y="44" width="2" height="1" fill="#00ff00"/><rect x="133" y="44" width="1" height="1" fill="#000"/><rect x="120" y="45" width="1" height="1" fill="#000"/><rect x="128" y="45" width="1" height="1" fill="#000"/><rect x="129" y="45" width="3" height="1" fill="#00ff00"/><rect x="132" y="45" width="1" height="1" fill="#000"/><rect x="129" y="46" width="3" height="1" fill="#000"/>
<rect x="123" y="44" width="3" height="1" fill="#000"/><rect x="122" y="45" width="1" height="1" fill="#000"/><rect x="123" y="45" width="3" height="1" fill="#00ff00"/><rect x="126" y="45" width="1" height="1" fill="#000"/><rect x="121" y="46" width="1" height="1" fill="#000"/><rect x="122" y="46" width="2" height="1" fill="#00ff00"/><rect x="124" y="46" width="1" height="1" fill="#000"/><rect x="125" y="46" width="2" height="1" fill="#00ff00"/><rect x="127" y="46" width="1" height="1" fill="#000"/><rect x="133" y="46" width="1" height="1" fill="#000"/><rect x="120" y="47" width="1" height="1" fill="#000"/><rect x="121" y="47" width="2" height="1" fill="#00ff00"/><rect x="123" y="47" width="1" height="1" fill="#000"/><rect x="125" y="47" width="1" height="1" fill="#000"/><rect x="126" y="47" width="2" height="1" fill="#00ff00"/><rect x="128" y="47" width="1" height="1" fill="#000"/><rect x="132" y="47" width="1" height="1" fill="#000"/><rect x="133" y="47" width="1" height="1" fill="#00ff00"/><rect x="134" y="47" width="1" height="1" fill="#000"/><rect x="119" y="48" width="1" height="1" fill="#000"/><rect x="120" y="48" width="2" height="1" fill="#00ff00"/><rect x="122" y="48" width="1" height="1" fill="#000"/><rect x="126" y="48" width="1" height="1" fill="#000"/><rect x="127" y="48" width="2" height="1" fill="#00ff00"/><rect x="129" y="48" width="1" height="1" fill="#000"/><rect x="131" y="48" width="1" height="1" fill="#000"/><rect x="132" y="48" width="2" height="1" fill="#00ff00"/><rect x="134" y="48" width="1" height="1" fill="#000"/><rect x="119" y="49" width="1" height="1" fill="#000"/><rect x="120" y="49" width="1" height="1" fill="#00ff00"/><rect x="121" y="49" width="1" height="1" fill="#000"/><rect x="127" y="49" width="1" height="1" fill="#000"/><rect x="128" y="49" width="2" height="1" fill="#00ff00"/><rect x="130" y="49" width="1" height="1" fill="#000"/><rect x="131" y="49" width="2" height="1" fill="#00ff00"/><rect x="133" y="49" width="1" height="1" fill="#000"/><rect x="120" y="50" width="1" height="1" fill="#000"/><rect x="128" y="50" width="1" height="1" fill="#000"/><rect x="129" y="50" width="3" height="1" fill="#00ff00"/><rect x="132" y="50" width="1" height="1" fill="#000"/><rect x="129" y="51" width="3" height="1" fill="#000"/>
<rect x="119" y="38" width="1" height="15" fill="#000"/><rect x="134" y="38" width="1" height="15" fill="#000"/>
<rect x="143" y="38" width="8" height="1" fill="#000"/><rect x="156" y="38" width="1" height="1" fill="#000"/><rect x="143" y="39" width="1" height="1" fill="#000"/><rect x="144" y="39" width="6" height="1" fill="#fff"/><rect x="150" y="39" width="1" height="1" fill="#000"/><rect x="152" y="39" width="5" height="1" fill="#000"/><rect x="142" y="40" width="1" height="1" fill="#000"/><rect x="143" y="40" width="1" height="1" fill="#fff"/><rect x="144" y="40" width="2" height="1" fill="#000"/><rect x="146" y="40" width="1" height="1" fill="#fff"/><rect x="147" y="40" width="1" height="1" fill="#000"/><rect x="148" y="40" width="2" height="1" fill="#fff"/><rect x="150" y="40" width="1" height="1" fill="#000"/><rect x="156" y="40" width="1" height="1" fill="#000"/><rect x="142" y="41" width="1" height="1" fill="#000"/><rect x="143" y="41" width="7" height="1" fill="#fff"/><rect x="150" y="41" width="1" height="1" fill="#000"/><rect x="156" y="41" width="1" height="1" fill="#000"/><rect x="142" y="42" width="1" height="1" fill="#000"/><rect x="143" y="42" width="7" height="1" fill="#fff"/><rect x="150" y="42" width="1" height="1" fill="#000"/><rect x="156" y="42" width="1" height="1" fill="#000"/><rect x="141" y="43" width="10" height="1" fill="#000"/><rect x="152" y="43" width="5" height="1" fill="#000"/><rect x="141" y="44" width="1" height="1" fill="#000"/><rect x="142" y="44" width="5" height="1" fill="#c0c0c0"/><rect x="147" y="44" width="2" height="1" fill="#ffff00"/><rect x="149" y="44" width="1" height="1" fill="#c0c0c0"/><rect x="150" y="44" width="1" height="1" fill="#000"/><rect x="156" y="44" width="1" height="1" fill="#000"/><rect x="141" y="45" width="10" height="1" fill="#000"/><rect x="156" y="45" width="1" height="1" fill="#000"/><rect x="141" y="46" width="1" height="1" fill="#000"/><rect x="142" y="46" width="8" height="1" fill="#c0c0c0"/><rect x="150" y="46" width="1" height="1" fill="#000"/><rect x="156" y="46" width="1" height="1" fill="#00ff00"/><rect x="142" y="47" width="8" height="1" fill="#000"/><rect x="152" y="47" width="2" height="1" fill="#000"/><rect x="155" y="47" width="2" height="1" fill="#00ff00"/><rect x="152" y="48" width="2" height="1" fill="#000"/><rect x="154" y="48" width="2" height="1" fill="#00ff00"/><rect x="156" y="48" width="1" height="1" fill="#000"/><rect x="142" y="49" width="1" height="1" fill="#000"/><rect x="146" y="49" width="1" height="1" fill="#000"/><rect x="151" y="49" width="1" height="1" fill="#00ff00"/><rect x="153" y="49" width="2" height="1" fill="#00ff00"/><rect x="156" y="49" width="1" height="1" fill="#000"/><rect x="142" y="50" width="1" height="1" fill="#000"/><rect x="146" y="50" width="1" height="1" fill="#000"/><rect x="151" y="50" width="1" height="1" fill="#000"/><rect x="152" y="50" width="2" height="1" fill="#00ff00"/><rect x="154" y="50" width="1" height="1" fill="#000"/><rect x="156" y="50" width="1" height="1" fill="#000"/><rect x="141" y="51" width="16" height="1" fill="#000"/><rect x="142" y="52" width="1" height="1" fill="#000"/><rect x="146" y="52" width="1" height="1" fill="#000"/><rect x="151" y="52" width="1" height="1" fill="#000"/><rect x="156" y="52" width="1" height="1" fill="#000"/>
<rect x="172" y="42" width="13" height="1" fill="#a00000"/><rect x="172" y="43" width="1" height="1" fill="#a00000"/><rect x="173" y="43" width="1" height="1" fill="#000080"/><rect x="174" y="43" width="1" height="1" fill="#fff"/><rect x="175" y="43" width="2" height="1" fill="#000080"/><rect x="177" y="43" width="1" height="1" fill="#fff"/><rect x="178" y="43" width="2" height="1" fill="#000080"/><rect x="180" y="43" width="1" height="1" fill="#fff"/><rect x="181" y="43" width="3" height="1" fill="#000080"/><rect x="184" y="43" width="1" height="1" fill="#a00000"/><rect x="172" y="44" width="1" height="1" fill="#a00000"/><rect x="173" y="44" width="11" height="1" fill="#000080"/><rect x="184" y="44" width="1" height="1" fill="#a00000"/><rect x="172" y="45" width="1" height="1" fill="#a00000"/><rect x="173" y="45" width="11" height="1" fill="#fff"/><rect x="184" y="45" width="1" height="1" fill="#a00000"/><rect x="172" y="46" width="1" height="1" fill="#a00000"/><rect x="173" y="46" width="1" height="1" fill="#fff"/><rect x="174" y="46" width="2" height="1" fill="#000"/><rect x="176" y="46" width="1" height="1" fill="#fff"/><rect x="177" y="46" width="2" height="1" fill="#000"/><rect x="179" y="46" width="1" height="1" fill="#fff"/><rect x="180" y="46" width="3" height="1" fill="#000"/><rect x="183" y="46" width="1" height="1" fill="#fff"/><rect x="184" y="46" width="1" height="1" fill="#a00000"/><rect x="172" y="47" width="1" height="1" fill="#a00000"/><rect x="173" y="47" width="11" height="1" fill="#fff"/><rect x="184" y="47" width="1" height="1" fill="#a00000"/><rect x="172" y="48" width="1" height="1" fill="#a00000"/><rect x="173" y="48" width="1" height="1" fill="#fff"/><rect x="174" y="48" width="2" height="1" fill="#000"/><rect x="176" y="48" width="1" height="1" fill="#fff"/><rect x="177" y="48" width="2" height="1" fill="#000"/><rect x="179" y="48" width="1" height="1" fill="#fff"/><rect x="180" y="48" width="3" height="1" fill="#000"/><rect x="183" y="48" width="1" height="1" fill="#fff"/><rect x="184" y="48" width="1" height="1" fill="#a00000"/><rect x="172" y="49" width="1" height="1" fill="#a00000"/><rect x="173" y="49" width="11" height="1" fill="#fff"/><rect x="184" y="49" width="1" height="1" fill="#a00000"/><rect x="172" y="50" width="1" height="1" fill="#a00000"/><rect x="173" y="50" width="1" height="1" fill="#fff"/><rect x="174" y="50" width="2" height="1" fill="#000"/><rect x="176" y="50" width="1" height="1" fill="#fff"/><rect x="177" y="50" width="2" height="1" fill="#000"/><rect x="179" y="50" width="1" height="1" fill="#fff"/><rect x="180" y="50" width="3" height="1" fill="#000"/><rect x="183" y="50" width="1" height="1" fill="#fff"/><rect x="184" y="50" width="1" height="1" fill="#a00000"/><rect x="172" y="51" width="1" height="1" fill="#a00000"/><rect x="173" y="51" width="11" height="1" fill="#fff"/><rect x="184" y="51" width="1" height="1" fill="#a00000"/><rect x="172" y="52" width="13" height="1" fill="#a00000"/>
<rect x="185" y="38" width="2" height="1" fill="#000"/><rect x="184" y="39" width="1" height="1" fill="#000"/><rect x="185" y="39" width="2" height="1" fill="#a000a0"/><rect x="187" y="39" width="1" height="1" fill="#000"/><rect x="184" y="40" width="1" height="1" fill="#000"/><rect x="185" y="40" width="2" height="1" fill="#a000a0"/><rect x="187" y="40" width="1" height="1" fill="#000"/><rect x="183" y="41" width="1" height="1" fill="#000"/><rect x="184" y="41" width="1" height="1" fill="#ffffa0"/><rect x="185" y="41" width="1" height="1" fill="#ffff00"/><rect x="186" y="41" width="1" height="1" fill="#000"/><rect x="183" y="42" width="1" height="1" fill="#000"/><rect x="184" y="42" width="1" height="1" fill="#ffffa0"/><rect x="185" y="42" width="1" height="1" fill="#ffff00"/><rect x="187" y="42" width="1" height="1" fill="#000"/><rect x="182" y="43" width="1" height="1" fill="#000"/><rect x="183" y="43" width="1" height="1" fill="#ffffa0"/><rect x="184" y="43" width="1" height="1" fill="#ffff00"/><rect x="185" y="43" width="1" height="1" fill="#000"/><rect x="182" y="44" width="1" height="1" fill="#000"/><rect x="183" y="44" width="1" height="1" fill="#ffffa0"/><rect x="184" y="44" width="1" height="1" fill="#ffff00"/><rect x="186" y="44" width="1" height="1" fill="#000"/><rect x="181" y="45" width="1" height="1" fill="#000"/><rect x="182" y="45" width="1" height="1" fill="#ffffa0"/><rect x="183" y="45" width="1" height="1" fill="#ffff00"/><rect x="184" y="45" width="1" height="1" fill="#000"/><rect x="181" y="46" width="1" height="1" fill="#000"/><rect x="182" y="46" width="1" height="1" fill="#ffffa0"/><rect x="183" y="46" width="1" height="1" fill="#ffff00"/><rect x="185" y="46" width="1" height="1" fill="#000"/><rect x="181" y="47" width="3" height="1" fill="#000"/><rect x="181" y="48" width="2" height="1" fill="#000"/>
<rect x="226" y="40" width="16" height="1" fill="#000"/><rect x="226" y="38" width="1" height="3" fill="#000"/><rect x="241" y="38" width="1" height="3" fill="#000"/><rect x="229" y="39" width="1" height="1" fill="#000"/><rect x="232" y="39" width="1" height="1" fill="#000"/><rect x="235" y="39" width="1" height="1" fill="#000"/><rect x="238" y="39" width="1" height="1" fill="#000"/>
<rect x="231" y="42" width="4" height="1" fill="#000"/><rect x="230" y="43" width="1" height="1" fill="#000"/><rect x="231" y="43" width="2" height="1" fill="#fdf6f6"/><rect x="233" y="43" width="2" height="1" fill="#00ffff"/><rect x="235" y="43" width="1" height="1" fill="#000"/><rect x="229" y="44" width="1" height="1" fill="#000"/><rect x="230" y="44" width="5" height="1" fill="#fdf6f6"/><rect x="235" y="44" width="1" height="1" fill="#00ffff"/><rect x="236" y="44" width="1" height="1" fill="#000"/><rect x="229" y="45" width="1" height="1" fill="#000"/><rect x="230" y="45" width="5" height="1" fill="#fdf6f6"/><rect x="235" y="45" width="1" height="1" fill="#00ffff"/><rect x="236" y="45" width="1" height="1" fill="#000"/><rect x="229" y="46" width="1" height="1" fill="#000"/><rect x="230" y="46" width="6" height="1" fill="#fdf6f6"/><rect x="236" y="46" width="1" height="1" fill="#000"/><rect x="229" y="47" width="1" height="1" fill="#000"/><rect x="230" y="47" width="1" height="1" fill="#00ffff"/><rect x="231" y="47" width="5" height="1" fill="#fdf6f6"/><rect x="236" y="47" width="1" height="1" fill="#000"/><rect x="230" y="48" width="1" height="1" fill="#000"/><rect x="231" y="48" width="1" height="1" fill="#00ffff"/><rect x="232" y="48" width="3" height="1" fill="#fdf6f6"/><rect x="235" y="48" width="1" height="1" fill="#000"/><rect x="231" y="49" width="4" height="1" fill="#000"/><rect x="229" y="49" width="2" height="1" fill="#000"/><rect x="228" y="50" width="3" height="1" fill="#000"/><rect x="226" y="51" width="4" height="1" fill="#000"/><rect x="226" y="52" width="3" height="1" fill="#000"/>
<rect x="237" y="50" width="5" height="1" fill="#000"/><rect x="239" y="48" width="1" height="5" fill="#000"/>
<rect x="249" y="40" width="16" height="1" fill="#000"/><rect x="249" y="38" width="1" height="3" fill="#000"/><rect x="264" y="38" width="1" height="3" fill="#000"/><rect x="252" y="39" width="1" height="1" fill="#000"/><rect x="255" y="39" width="1" height="1" fill="#000"/><rect x="258" y="39" width="1" height="1" fill="#000"/><rect x="261" y="39" width="1" height="1" fill="#000"/>
<rect x="254" y="42" width="4" height="1" fill="#000"/><rect x="253" y="43" width="1" height="1" fill="#000"/><rect x="254" y="43" width="2" height="1" fill="#fdf6f6"/><rect x="256" y="43" width="2" height="1" fill="#00ffff"/><rect x="258" y="43" width="1" height="1" fill="#000"/><rect x="252" y="44" width="1" height="1" fill="#000"/><rect x="253" y="44" width="5" height="1" fill="#fdf6f6"/><rect x="258" y="44" width="1" height="1" fill="#00ffff"/><rect x="259" y="44" width="1" height="1" fill="#000"/><rect x="252" y="45" width="1" height="1" fill="#000"/><rect x="253" y="45" width="5" height="1" fill="#fdf6f6"/><rect x="258" y="45" width="1" height="1" fill="#00ffff"/><rect x="259" y="45" width="1" height="1" fill="#000"/><rect x="252" y="46" width="1" height="1" fill="#000"/><rect x="253" y="46" width="6" height="1" fill="#fdf6f6"/><rect x="259" y="46" width="1" height="1" fill="#000"/><rect x="252" y="47" width="1" height="1" fill="#000"/><rect x="253" y="47" width="1" height="1" fill="#00ffff"/><rect x="254" y="47" width="5" height="1" fill="#fdf6f6"/><rect x="259" y="47" width="1" height="1" fill="#000"/><rect x="253" y="48" width="1" height="1" fill="#000"/><rect x="254" y="48" width="1" height="1" fill="#00ffff"/><rect x="255" y="48" width="3" height="1" fill="#fdf6f6"/><rect x="258" y="48" width="1" height="1" fill="#000"/><rect x="254" y="49" width="4" height="1" fill="#000"/><rect x="252" y="49" width="2" height="1" fill="#000"/><rect x="251" y="50" width="3" height="1" fill="#000"/><rect x="249" y="51" width="4" height="1" fill="#000"/><rect x="249" y="52" width="3" height="1" fill="#000"/>
<rect x="260" y="50" width="5" height="1" fill="#000"/>
<rect x="276" y="42" width="3" height="1" fill="#000"/><rect x="275" y="43" width="1" height="1" fill="#000"/><rect x="276" y="43" width="3" height="1" fill="#00ff00"/><rect x="279" y="43" width="1" height="1" fill="#000"/><rect x="274" y="44" width="1" height="1" fill="#000"/><rect x="275" y="44" width="2" height="1" fill="#00ff00"/><rect x="277" y="44" width="1" height="1" fill="#000"/><rect x="278" y="44" width="2" height="1" fill="#00ff00"/><rect x="280" y="44" width="1" height="1" fill="#000"/><rect x="286" y="44" width="1" height="1" fill="#000"/><rect x="273" y="45" width="1" height="1" fill="#000"/><rect x="274" y="45" width="2" height="1" fill="#00ff00"/><rect x="276" y="45" width="1" height="1" fill="#000"/><rect x="278" y="45" width="1" height="1" fill="#000"/><rect x="279" y="45" width="2" height="1" fill="#00ff00"/><rect x="281" y="45" width="1" height="1" fill="#000"/><rect x="285" y="45" width="1" height="1" fill="#000"/><rect x="286" y="45" width="1" height="1" fill="#00ff00"/><rect x="287" y="45" width="1" height="1" fill="#000"/><rect x="272" y="46" width="1" height="1" fill="#000"/><rect x="273" y="46" width="2" height="1" fill="#00ff00"/><rect x="275" y="46" width="1" height="1" fill="#000"/><rect x="279" y="46" width="1" height="1" fill="#000"/><rect x="280" y="46" width="2" height="1" fill="#00ff00"/><rect x="282" y="46" width="1" height="1" fill="#000"/><rect x="284" y="46" width="1" height="1" fill="#000"/><rect x="285" y="46" width="2" height="1" fill="#00ff00"/><rect x="287" y="46" width="1" height="1" fill="#000"/><rect x="272" y="47" width="1" height="1" fill="#000"/><rect x="273" y="47" width="1" height="1" fill="#00ff00"/><rect x="274" y="47" width="1" height="1" fill="#000"/><rect x="280" y="47" width="1" height="1" fill="#000"/><rect x="281" y="47" width="2" height="1" fill="#00ff00"/><rect x="283" y="47" width="1" height="1" fill="#000"/><rect x="284" y="47" width="2" height="1" fill="#00ff00"/><rect x="286" y="47" width="1" height="1" fill="#000"/><rect x="273" y="48" width="1" height="1" fill="#000"/><rect x="281" y="48" width="1" height="1" fill="#000"/><rect x="282" y="48" width="3" height="1" fill="#00ff00"/><rect x="285" y="48" width="1" height="1" fill="#000"/><rect x="282" y="49" width="3" height="1" fill="#000"/>
<rect x="272" y="38" width="1" height="15" fill="#000"/><rect x="287" y="38" width="1" height="15" fill="#000"/>
<rect x="307" y="38" width="3" height="1" fill="#000"/><rect x="306" y="39" width="1" height="1" fill="#000"/><rect x="307" y="39" width="3" height="1" fill="#00ff00"/><rect x="310" y="39" width="1" height="1" fill="#000"/><rect x="305" y="40" width="1" height="1" fill="#000"/><rect x="306" y="40" width="2" height="1" fill="#00ff00"/><rect x="308" y="40" width="1" height="1" fill="#000"/><rect x="309" y="40" width="2" height="1" fill="#00ff00"/><rect x="311" y="40" width="1" height="1" fill="#000"/><rect x="317" y="40" width="1" height="1" fill="#000"/><rect x="304" y="41" width="1" height="1" fill="#000"/><rect x="305" y="41" width="2" height="1" fill="#00ff00"/><rect x="307" y="41" width="1" height="1" fill="#000"/><rect x="309" y="41" width="1" height="1" fill="#000"/><rect x="310" y="41" width="2" height="1" fill="#00ff00"/><rect x="312" y="41" width="1" height="1" fill="#000"/><rect x="316" y="41" width="1" height="1" fill="#000"/><rect x="317" y="41" width="1" height="1" fill="#00ff00"/><rect x="318" y="41" width="1" height="1" fill="#000"/><rect x="303" y="42" width="1" height="1" fill="#000"/><rect x="304" y="42" width="2" height="1" fill="#00ff00"/><rect x="306" y="42" width="1" height="1" fill="#000"/><rect x="310" y="42" width="1" height="1" fill="#000"/><rect x="311" y="42" width="2" height="1" fill="#00ff00"/><rect x="313" y="42" width="1" height="1" fill="#000"/><rect x="315" y="42" width="1" height="1" fill="#000"/><rect x="316" y="42" width="2" height="1" fill="#00ff00"/><rect x="318" y="42" width="1" height="1" fill="#000"/><rect x="303" y="43" width="1" height="1" fill="#000"/><rect x="304" y="43" width="1" height="1" fill="#00ff00"/><rect x="305" y="43" width="1" height="1" fill="#000"/><rect x="311" y="43" width="1" height="1" fill="#000"/><rect x="312" y="43" width="2" height="1" fill="#00ff00"/><rect x="314" y="43" width="1" height="1" fill="#000"/><rect x="315" y="43" width="2" height="1" fill="#00ff00"/><rect x="317" y="43" width="1" height="1" fill="#000"/><rect x="304" y="44" width="1" height="1" fill="#000"/><rect x="312" y="44" width="1" height="1" fill="#000"/><rect x="313" y="44" width="3" height="1" fill="#00ff00"/><rect x="316" y="44" width="1" height="1" fill="#000"/><rect x="313" y="45" width="3" height="1" fill="#000"/>
<rect x="303" y="38" width="1" height="15" fill="#000"/>
<rect x="306" y="46" width="2" height="1" fill="#000"/><rect x="305" y="47" width="2" height="1" fill="#000"/><rect x="304" y="48" width="8" height="1" fill="#000"/><rect x="305" y="49" width="2" height="1" fill="#000"/><rect x="306" y="50" width="2" height="1" fill="#000"/>
<rect x="330" y="38" width="3" height="1" fill="#000"/><rect x="329" y="39" width="1" height="1" fill="#000"/><rect x="330" y="39" width="3" height="1" fill="#00ff00"/><rect x="333" y="39" width="1" height="1" fill="#000"/><rect x="328" y="40" width="1" height="1" fill="#000"/><rect x="329" y="40" width="2" height="1" fill="#00ff00"/><rect x="331" y="40" width="1" height="1" fill="#000"/><rect x="332" y="40" width="2" height="1" fill="#00ff00"/><rect x="334" y="40" width="1" height="1" fill="#000"/><rect x="340" y="40" width="1" height="1" fill="#000"/><rect x="327" y="41" width="1" height="1" fill="#000"/><rect x="328" y="41" width="2" height="1" fill="#00ff00"/><rect x="330" y="41" width="1" height="1" fill="#000"/><rect x="332" y="41" width="1" height="1" fill="#000"/><rect x="333" y="41" width="2" height="1" fill="#00ff00"/><rect x="335" y="41" width="1" height="1" fill="#000"/><rect x="339" y="41" width="1" height="1" fill="#000"/><rect x="340" y="41" width="1" height="1" fill="#00ff00"/><rect x="341" y="41" width="1" height="1" fill="#000"/><rect x="326" y="42" width="1" height="1" fill="#000"/><rect x="327" y="42" width="2" height="1" fill="#00ff00"/><rect x="329" y="42" width="1" height="1" fill="#000"/><rect x="333" y="42" width="1" height="1" fill="#000"/><rect x="334" y="42" width="2" height="1" fill="#00ff00"/><rect x="336" y="42" width="1" height="1" fill="#000"/><rect x="338" y="42" width="1" height="1" fill="#000"/><rect x="339" y="42" width="2" height="1" fill="#00ff00"/><rect x="341" y="42" width="1" height="1" fill="#000"/><rect x="326" y="43" width="1" height="1" fill="#000"/><rect x="327" y="43" width="1" height="1" fill="#00ff00"/><rect x="328" y="43" width="1" height="1" fill="#000"/><rect x="334" y="43" width="1" height="1" fill="#000"/><rect x="335" y="43" width="2" height="1" fill="#00ff00"/><rect x="337" y="43" width="1" height="1" fill="#000"/><rect x="338" y="43" width="2" height="1" fill="#00ff00"/><rect x="340" y="43" width="1" height="1" fill="#000"/><rect x="327" y="44" width="1" height="1" fill="#000"/><rect x="335" y="44" width="1" height="1" fill="#000"/><rect x="336" y="44" width="3" height="1" fill="#00ff00"/><rect x="339" y="44" width="1" height="1" fill="#000"/><rect x="336" y="45" width="3" height="1" fill="#000"/>
<rect x="331" y="46" width="2" height="1" fill="#000"/><rect x="330" y="47" width="2" height="1" fill="#000"/><rect x="329" y="48" width="8" height="1" fill="#000"/><rect x="330" y="49" width="2" height="1" fill="#000"/><rect x="331" y="50" width="2" height="1" fill="#000"/>
<rect x="358" y="38" width="3" height="1" fill="#000"/><rect x="357" y="39" width="1" height="1" fill="#000"/><rect x="358" y="39" width="3" height="1" fill="#00ff00"/><rect x="361" y="39" width="1" height="1" fill="#000"/><rect x="350" y="40" width="1" height="1" fill="#000"/><rect x="356" y="40" width="1" height="1" fill="#000"/><rect x="357" y="40" width="2" height="1" fill="#00ff00"/><rect x="359" y="40" width="1" height="1" fill="#000"/><rect x="360" y="40" width="2" height="1" fill="#00ff00"/><rect x="362" y="40" width="1" height="1" fill="#000"/><rect x="349" y="41" width="1" height="1" fill="#000"/><rect x="350" y="41" width="1" height="1" fill="#00ff00"/><rect x="351" y="41" width="1" height="1" fill="#000"/><rect x="355" y="41" width="1" height="1" fill="#000"/><rect x="356" y="41" width="2" height="1" fill="#00ff00"/><rect x="358" y="41" width="1" height="1" fill="#000"/><rect x="360" y="41" width="1" height="1" fill="#000"/><rect x="361" y="41" width="2" height="1" fill="#00ff00"/><rect x="363" y="41" width="1" height="1" fill="#000"/><rect x="349" y="42" width="1" height="1" fill="#000"/><rect x="350" y="42" width="2" height="1" fill="#00ff00"/><rect x="352" y="42" width="1" height="1" fill="#000"/><rect x="354" y="42" width="1" height="1" fill="#000"/><rect x="355" y="42" width="2" height="1" fill="#00ff00"/><rect x="357" y="42" width="1" height="1" fill="#000"/><rect x="361" y="42" width="1" height="1" fill="#000"/><rect x="362" y="42" width="2" height="1" fill="#00ff00"/><rect x="364" y="42" width="1" height="1" fill="#000"/><rect x="350" y="43" width="1" height="1" fill="#000"/><rect x="351" y="43" width="2" height="1" fill="#00ff00"/><rect x="353" y="43" width="1" height="1" fill="#000"/><rect x="354" y="43" width="2" height="1" fill="#00ff00"/><rect x="356" y="43" width="1" height="1" fill="#000"/><rect x="362" y="43" width="1" height="1" fill="#000"/><rect x="363" y="43" width="1" height="1" fill="#00ff00"/><rect x="364" y="43" width="1" height="1" fill="#000"/><rect x="351" y="44" width="1" height="1" fill="#000"/><rect x="352" y="44" width="3" height="1" fill="#00ff00"/><rect x="355" y="44" width="1" height="1" fill="#000"/><rect x="363" y="44" width="1" height="1" fill="#000"/><rect x="352" y="45" width="3" height="1" fill="#000"/>
<rect x="358" y="46" width="2" height="1" fill="#000"/><rect x="359" y="47" width="2" height="1" fill="#000"/><rect x="354" y="48" width="8" height="1" fill="#000"/><rect x="359" y="49" width="2" height="1" fill="#000"/><rect x="358" y="50" width="2" height="1" fill="#000"/>
<rect x="381" y="38" width="3" height="1" fill="#000"/><rect x="380" y="39" width="1" height="1" fill="#000"/><rect x="381" y="39" width="3" height="1" fill="#00ff00"/><rect x="384" y="39" width="1" height="1" fill="#000"/><rect x="373" y="40" width="1" height="1" fill="#000"/><rect x="379" y="40" width="1" height="1" fill="#000"/><rect x="380" y="40" width="2" height="1" fill="#00ff00"/><rect x="382" y="40" width="1" height="1" fill="#000"/><rect x="383" y="40" width="2" height="1" fill="#00ff00"/><rect x="385" y="40" width="1" height="1" fill="#000"/><rect x="372" y="41" width="1" height="1" fill="#000"/><rect x="373" y="41" width="1" height="1" fill="#00ff00"/><rect x="374" y="41" width="1" height="1" fill="#000"/><rect x="378" y="41" width="1" height="1" fill="#000"/><rect x="379" y="41" width="2" height="1" fill="#00ff00"/><rect x="381" y="41" width="1" height="1" fill="#000"/><rect x="383" y="41" width="1" height="1" fill="#000"/><rect x="384" y="41" width="2" height="1" fill="#00ff00"/><rect x="386" y="41" width="1" height="1" fill="#000"/><rect x="372" y="42" width="1" height="1" fill="#000"/><rect x="373" y="42" width="2" height="1" fill="#00ff00"/><rect x="375" y="42" width="1" height="1" fill="#000"/><rect x="377" y="42" width="1" height="1" fill="#000"/><rect x="378" y="42" width="2" height="1" fill="#00ff00"/><rect x="380" y="42" width="1" height="1" fill="#000"/><rect x="384" y="42" width="1" height="1" fill="#000"/><rect x="385" y="42" width="2" height="1" fill="#00ff00"/><rect x="387" y="42" width="1" height="1" fill="#000"/><rect x="373" y="43" width="1" height="1" fill="#000"/><rect x="374" y="43" width="2" height="1" fill="#00ff00"/><rect x="376" y="43" width="1" height="1" fill="#000"/><rect x="377" y="43" width="2" height="1" fill="#00ff00"/><rect x="379" y="43" width="1" height="1" fill="#000"/><rect x="385" y="43" width="1" height="1" fill="#000"/><rect x="386" y="43" width="1" height="1" fill="#00ff00"/><rect x="387" y="43" width="1" height="1" fill="#000"/><rect x="374" y="44" width="1" height="1" fill="#000"/><rect x="375" y="44" width="3" height="1" fill="#00ff00"/><rect x="378" y="44" width="1" height="1" fill="#000"/><rect x="386" y="44" width="1" height="1" fill="#000"/><rect x="375" y="45" width="3" height="1" fill="#000"/>
<rect x="387" y="38" width="1" height="15" fill="#000"/>
<rect x="383" y="46" width="2" height="1" fill="#000"/><rect x="384" y="47" width="2" height="1" fill="#000"/><rect x="379" y="48" width="8" height="1" fill="#000"/><rect x="384" y="49" width="2" height="1" fill="#000"/><rect x="383" y="50" width="2" height="1" fill="#000"/>
<rect x="408" y="39" width="4" height="1" fill="#000"/><rect x="407" y="40" width="1" height="1" fill="#000"/><rect x="408" y="40" width="2" height="1" fill="#fdf6f6"/><rect x="410" y="40" width="2" height="1" fill="#00ffff"/><rect x="412" y="40" width="1" height="1" fill="#000"/><rect x="406" y="41" width="1" height="1" fill="#000"/><rect x="407" y="41" width="5" height="1" fill="#fdf6f6"/><rect x="412" y="41" width="1" height="1" fill="#00ffff"/><rect x="413" y="41" width="1" height="1" fill="#000"/><rect x="406" y="42" width="1" height="1" fill="#000"/><rect x="407" y="42" width="5" height="1" fill="#fdf6f6"/><rect x="412" y="42" width="1" height="1" fill="#00ffff"/><rect x="413" y="42" width="1" height="1" fill="#000"/><rect x="406" y="43" width="1" height="1" fill="#000"/><rect x="407" y="43" width="6" height="1" fill="#fdf6f6"/><rect x="413" y="43" width="1" height="1" fill="#000"/><rect x="406" y="44" width="1" height="1" fill="#000"/><rect x="407" y="44" width="1" height="1" fill="#00ffff"/><rect x="408" y="44" width="5" height="1" fill="#fdf6f6"/><rect x="413" y="44" width="1" height="1" fill="#000"/><rect x="407" y="45" width="1" height="1" fill="#000"/><rect x="408" y="45" width="1" height="1" fill="#00ffff"/><rect x="409" y="45" width="3" height="1" fill="#fdf6f6"/><rect x="412" y="45" width="1" height="1" fill="#000"/><rect x="408" y="46" width="4" height="1" fill="#000"/><rect x="406" y="46" width="2" height="1" fill="#000"/><rect x="405" y="47" width="3" height="1" fill="#000"/><rect x="403" y="48" width="4" height="1" fill="#000"/><rect x="403" y="49" width="3" height="1" fill="#000"/>
<rect x="408" y="50" width="5" height="1" fill="#000"/><rect x="410" y="48" width="1" height="5" fill="#000"/>
<rect x="416" y="38" width="1" height="15" fill="#000"/><rect x="416" y="38" width="3" height="1" fill="#000"/><rect x="416" y="52" width="3" height="1" fill="#000"/><rect x="417" y="41" width="1" height="1" fill="#000"/><rect x="417" y="44" width="1" height="1" fill="#000"/><rect x="417" y="47" width="1" height="1" fill="#000"/><rect x="417" y="50" width="1" height="1" fill="#000"/>
<rect x="431" y="39" width="4" height="1" fill="#000"/><rect x="430" y="40" width="1" height="1" fill="#000"/><rect x="431" y="40" width="2" height="1" fill="#fdf6f6"/><rect x="433" y="40" width="2" height="1" fill="#00ffff"/><rect x="435" y="40" width="1" height="1" fill="#000"/><rect x="429" y="41" width="1" height="1" fill="#000"/><rect x="430" y="41" width="5" height="1" fill="#fdf6f6"/><rect x="435" y="41" width="1" height="1" fill="#00ffff"/><rect x="436" y="41" width="1" height="1" fill="#000"/><rect x="429" y="42" width="1" height="1" fill="#000"/><rect x="430" y="42" width="5" height="1" fill="#fdf6f6"/><rect x="435" y="42" width="1" height="1" fill="#00ffff"/><rect x="436" y="42" width="1" height="1" fill="#000"/><rect x="429" y="43" width="1" height="1" fill="#000"/><rect x="430" y="43" width="6" height="1" fill="#fdf6f6"/><rect x="436" y="43" width="1" height="1" fill="#000"/><rect x="429" y="44" width="1" height="1" fill="#000"/><rect x="430" y="44" width="1" height="1" fill="#00ffff"/><rect x="431" y="44" width="5" height="1" fill="#fdf6f6"/><rect x="436" y="44" width="1" height="1" fill="#000"/><rect x="430" y="45" width="1" height="1" fill="#000"/><rect x="431" y="45" width="1" height="1" fill="#00ffff"/><rect x="432" y="45" width="3" height="1" fill="#fdf6f6"/><rect x="435" y="45" width="1" height="1" fill="#000"/><rect x="431" y="46" width="4" height="1" fill="#000"/><rect x="429" y="46" width="2" height="1" fill="#000"/><rect x="428" y="47" width="3" height="1" fill="#000"/><rect x="426" y="48" width="4" height="1" fill="#000"/><rect x="426" y="49" width="3" height="1" fill="#000"/>
<rect x="431" y="50" width="5" height="1" fill="#000"/>
<rect x="439" y="38" width="1" height="15" fill="#000"/><rect x="439" y="38" width="3" height="1" fill="#000"/><rect x="439" y="52" width="3" height="1" fill="#000"/><rect x="440" y="41" width="1" height="1" fill="#000"/><rect x="440" y="44" width="1" height="1" fill="#000"/><rect x="440" y="47" width="1" height="1" fill="#000"/><rect x="440" y="50" width="1" height="1" fill="#000"/>
<rect x="449" y="40" width="16" height="1" fill="#000"/><rect x="449" y="51" width="16" height="1" fill="#000"/>
<rect x="453" y="42" width="3" height="1" fill="#000"/><rect x="452" y="43" width="1" height="1" fill="#000"/><rect x="453" y="43" width="3" height="1" fill="#00ff00"/><rect x="456" y="43" width="1" height="1" fill="#000"/><rect x="451" y="44" width="1" height="1" fill="#000"/><rect x="452" y="44" width="2" height="1" fill="#00ff00"/><rect x="454" y="44" width="1" height="1" fill="#000"/><rect x="455" y="44" width="2" height="1" fill="#00ff00"/><rect x="457" y="44" width="1" height="1" fill="#000"/><rect x="463" y="44" width="1" height="1" fill="#000"/><rect x="450" y="45" width="1" height="1" fill="#000"/><rect x="451" y="45" width="2" height="1" fill="#00ff00"/><rect x="453" y="45" width="1" height="1" fill="#000"/><rect x="455" y="45" width="1" height="1" fill="#000"/><rect x="456" y="45" width="2" height="1" fill="#00ff00"/><rect x="458" y="45" width="1" height="1" fill="#000"/><rect x="462" y="45" width="1" height="1" fill="#000"/><rect x="463" y="45" width="1" height="1" fill="#00ff00"/><rect x="464" y="45" width="1" height="1" fill="#000"/><rect x="449" y="46" width="1" height="1" fill="#000"/><rect x="450" y="46" width="2" height="1" fill="#00ff00"/><rect x="452" y="46" width="1" height="1" fill="#000"/><rect x="456" y="46" width="1" height="1" fill="#000"/><rect x="457" y="46" width="2" height="1" fill="#00ff00"/><rect x="459" y="46" width="1" height="1" fill="#000"/><rect x="461" y="46" width="1" height="1" fill="#000"/><rect x="462" y="46" width="2" height="1" fill="#00ff00"/><rect x="464" y="46" width="1" height="1" fill="#000"/><rect x="449" y="47" width="1" height="1" fill="#000"/><rect x="450" y="47" width="1" height="1" fill="#00ff00"/><rect x="451" y="47" width="1" height="1" fill="#000"/><rect x="457" y="47" width="1" height="1" fill="#000"/><rect x="458" y="47" width="2" height="1" fill="#00ff00"/><rect x="460" y="47" width="1" height="1" fill="#000"/><rect x="461" y="47" width="2" height="1" fill="#00ff00"/><rect x="463" y="47" width="1" height="1" fill="#000"/><rect x="450" y="48" width="1" height="1" fill="#000"/><rect x="458" y="48" width="1" height="1" fill="#000"/><rect x="459" y="48" width="3" height="1" fill="#00ff00"/><rect x="462" y="48" width="1" height="1" fill="#000"/><rect x="459" y="49" width="3" height="1" fill="#000"/>
<rect x="480" y="39" width="16" height="1" fill="#000"/><rect x="482" y="38" width="1" height="1" fill="#000"/><rect x="485" y="38" width="1" height="1" fill="#000"/><rect x="488" y="38" width="1" height="1" fill="#000"/><rect x="491" y="38" width="1" height="1" fill="#000"/><rect x="494" y="38" width="1" height="1" fill="#000"/>
<rect x="494" y="39" width="1" height="14" fill="#000"/><rect x="495" y="42" width="1" height="1" fill="#000"/><rect x="495" y="45" width="1" height="1" fill="#000"/><rect x="495" y="48" width="1" height="1" fill="#000"/><rect x="495" y="51" width="1" height="1" fill="#000"/>
<rect x="484" y="40" width="4" height="1" fill="#000"/><rect x="483" y="41" width="1" height="1" fill="#000"/><rect x="484" y="41" width="2" height="1" fill="#fdf6f6"/><rect x="486" y="41" width="2" height="1" fill="#00ffff"/><rect x="488" y="41" width="1" height="1" fill="#000"/><rect x="482" y="42" width="1" height="1" fill="#000"/><rect x="483" y="42" width="5" height="1" fill="#fdf6f6"/><rect x="488" y="42" width="1" height="1" fill="#00ffff"/><rect x="489" y="42" width="1" height="1" fill="#000"/><rect x="482" y="43" width="1" height="1" fill="#000"/><rect x="483" y="43" width="5" height="1" fill="#fdf6f6"/><rect x="488" y="43" width="1" height="1" fill="#00ffff"/><rect x="489" y="43" width="1" height="1" fill="#000"/><rect x="482" y="44" width="1" height="1" fill="#000"/><rect x="483" y="44" width="6" height="1" fill="#fdf6f6"/><rect x="489" y="44" width="1" height="1" fill="#000"/><rect x="482" y="45" width="1" height="1" fill="#000"/><rect x="483" y="45" width="1" height="1" fill="#00ffff"/><rect x="484" y="45" width="5" height="1" fill="#fdf6f6"/><rect x="489" y="45" width="1" height="1" fill="#000"/><rect x="483" y="46" width="1" height="1" fill="#000"/><rect x="484" y="46" width="1" height="1" fill="#00ffff"/><rect x="485" y="46" width="3" height="1" fill="#fdf6f6"/><rect x="488" y="46" width="1" height="1" fill="#000"/><rect x="484" y="47" width="4" height="1" fill="#000"/><rect x="482" y="47" width="2" height="1" fill="#000"/><rect x="481" y="48" width="3" height="1" fill="#000"/><rect x="480" y="49" width="3" height="1" fill="#000"/><rect x="480" y="50" width="2" height="1" fill="#000"/>
<g shape-rendering="auto"><path d="M488.2 45.8 C492 45.2 493 48 492 50 C491 52 489.5 52.6 488 52.4" fill="none" stroke="#0000ff" stroke-width="2.2"/><path d="M484.6 46.4 L488.6 42.6 L488.8 49.4 Z" fill="#0000ff"/></g>
<rect x="518" y="38" width="1" height="1" fill="#000"/><rect x="517" y="39" width="3" height="1" fill="#000"/><rect x="516" y="40" width="5" height="1" fill="#000"/><rect x="516" y="41" width="1" height="1" fill="#000"/><rect x="518" y="41" width="1" height="1" fill="#000"/><rect x="520" y="41" width="1" height="1" fill="#000"/><rect x="518" y="42" width="1" height="1" fill="#000"/><rect x="518" y="43" width="1" height="1" fill="#000"/><rect x="518" y="44" width="1" height="1" fill="#000"/>
<rect x="515" y="45" width="3" height="1" fill="#000"/><rect x="514" y="46" width="1" height="1" fill="#000"/><rect x="515" y="46" width="3" height="1" fill="#00ff00"/><rect x="518" y="46" width="1" height="1" fill="#000"/><rect x="513" y="47" width="1" height="1" fill="#000"/><rect x="514" y="47" width="2" height="1" fill="#00ff00"/><rect x="516" y="47" width="1" height="1" fill="#000"/><rect x="517" y="47" width="2" height="1" fill="#00ff00"/><rect x="519" y="47" width="1" height="1" fill="#000"/><rect x="525" y="47" width="1" height="1" fill="#000"/><rect x="512" y="48" width="1" height="1" fill="#000"/><rect x="513" y="48" width="2" height="1" fill="#00ff00"/><rect x="515" y="48" width="1" height="1" fill="#000"/><rect x="517" y="48" width="1" height="1" fill="#000"/><rect x="518" y="48" width="2" height="1" fill="#00ff00"/><rect x="520" y="48" width="1" height="1" fill="#000"/><rect x="524" y="48" width="1" height="1" fill="#000"/><rect x="525" y="48" width="1" height="1" fill="#00ff00"/><rect x="526" y="48" width="1" height="1" fill="#000"/><rect x="511" y="49" width="1" height="1" fill="#000"/><rect x="512" y="49" width="2" height="1" fill="#00ff00"/><rect x="514" y="49" width="1" height="1" fill="#000"/><rect x="518" y="49" width="1" height="1" fill="#000"/><rect x="519" y="49" width="2" height="1" fill="#00ff00"/><rect x="521" y="49" width="1" height="1" fill="#000"/><rect x="523" y="49" width="1" height="1" fill="#000"/><rect x="524" y="49" width="2" height="1" fill="#00ff00"/><rect x="526" y="49" width="1" height="1" fill="#000"/><rect x="511" y="50" width="1" height="1" fill="#000"/><rect x="512" y="50" width="1" height="1" fill="#00ff00"/><rect x="513" y="50" width="1" height="1" fill="#000"/><rect x="519" y="50" width="1" height="1" fill="#000"/><rect x="520" y="50" width="2" height="1" fill="#00ff00"/><rect x="522" y="50" width="1" height="1" fill="#000"/><rect x="523" y="50" width="2" height="1" fill="#00ff00"/><rect x="525" y="50" width="1" height="1" fill="#000"/><rect x="512" y="51" width="1" height="1" fill="#000"/><rect x="520" y="51" width="1" height="1" fill="#000"/><rect x="521" y="51" width="3" height="1" fill="#00ff00"/><rect x="524" y="51" width="1" height="1" fill="#000"/><rect x="521" y="52" width="3" height="1" fill="#000"/>
<rect x="544" y="38" width="3" height="1" fill="#000"/><rect x="535" y="39" width="1" height="1" fill="#000"/><rect x="543" y="39" width="1" height="1" fill="#000"/><rect x="544" y="39" width="3" height="1" fill="#00ff00"/><rect x="547" y="39" width="1" height="1" fill="#000"/><rect x="534" y="40" width="1" height="1" fill="#000"/><rect x="535" y="40" width="1" height="1" fill="#00ff00"/><rect x="536" y="40" width="1" height="1" fill="#000"/><rect x="542" y="40" width="1" height="1" fill="#000"/><rect x="543" y="40" width="2" height="1" fill="#00ff00"/><rect x="545" y="40" width="1" height="1" fill="#000"/><rect x="546" y="40" width="2" height="1" fill="#00ff00"/><rect x="548" y="40" width="1" height="1" fill="#000"/><rect x="534" y="41" width="1" height="1" fill="#000"/><rect x="535" y="41" width="2" height="1" fill="#00ff00"/><rect x="537" y="41" width="1" height="1" fill="#000"/><rect x="541" y="41" width="1" height="1" fill="#000"/><rect x="542" y="41" width="2" height="1" fill="#00ff00"/><rect x="544" y="41" width="1" height="1" fill="#000"/><rect x="546" y="41" width="1" height="1" fill="#000"/><rect x="547" y="41" width="2" height="1" fill="#00ff00"/><rect x="549" y="41" width="1" height="1" fill="#000"/><rect x="535" y="42" width="1" height="1" fill="#000"/><rect x="536" y="42" width="2" height="1" fill="#00ff00"/><rect x="538" y="42" width="1" height="1" fill="#000"/><rect x="540" y="42" width="1" height="1" fill="#000"/><rect x="541" y="42" width="2" height="1" fill="#00ff00"/><rect x="543" y="42" width="1" height="1" fill="#000"/><rect x="547" y="42" width="1" height="1" fill="#000"/><rect x="548" y="42" width="1" height="1" fill="#00ff00"/><rect x="549" y="42" width="1" height="1" fill="#000"/><rect x="536" y="43" width="1" height="1" fill="#000"/><rect x="537" y="43" width="2" height="1" fill="#00ff00"/><rect x="539" y="43" width="1" height="1" fill="#000"/><rect x="540" y="43" width="2" height="1" fill="#00ff00"/><rect x="542" y="43" width="1" height="1" fill="#000"/><rect x="548" y="43" width="1" height="1" fill="#000"/><rect x="537" y="44" width="1" height="1" fill="#000"/><rect x="538" y="44" width="3" height="1" fill="#00ff00"/><rect x="541" y="44" width="1" height="1" fill="#000"/><rect x="538" y="45" width="3" height="1" fill="#000"/>
<rect x="541" y="46" width="1" height="1" fill="#000"/><rect x="541" y="47" width="1" height="1" fill="#000"/><rect x="541" y="48" width="1" height="1" fill="#000"/><rect x="539" y="49" width="1" height="1" fill="#000"/><rect x="541" y="49" width="1" height="1" fill="#000"/><rect x="543" y="49" width="1" height="1" fill="#000"/><rect x="539" y="50" width="5" height="1" fill="#000"/><rect x="540" y="51" width="3" height="1" fill="#000"/><rect x="541" y="52" width="1" height="1" fill="#000"/>
<rect x="569" y="38" width="3" height="11" fill="#000"/><rect x="565" y="42" width="11" height="3" fill="#000"/><rect x="570" y="39" width="1" height="9" fill="#ffff00"/><rect x="566" y="43" width="9" height="1" fill="#ffff00"/>
<g shape-rendering="auto"><path d="M591.8 40.6 L599.2 49.4 M599.2 40.6 L591.8 49.4" stroke="#000" stroke-width="2.7" stroke-linecap="butt"/><path d="M592.2 41.1 L598.8 48.9 M598.8 41.1 L592.2 48.9" stroke="#fff" stroke-width="1.3" stroke-linecap="butt"/></g>
<rect x="588" y="44" width="6" height="3" fill="#000"/><rect x="589" y="45" width="4" height="1" fill="#00ff00"/><rect x="597" y="44" width="6" height="3" fill="#000"/><rect x="598" y="45" width="4" height="1" fill="#00ff00"/>
<rect x="623" y="39" width="3" height="1" fill="#a0a0a0"/><rect x="622" y="40" width="1" height="1" fill="#a0a0a0"/><rect x="623" y="40" width="3" height="1" fill="#a0a0a0"/><rect x="626" y="40" width="1" height="1" fill="#a0a0a0"/><rect x="621" y="41" width="1" height="1" fill="#a0a0a0"/><rect x="622" y="41" width="2" height="1" fill="#a0a0a0"/><rect x="624" y="41" width="1" height="1" fill="#a0a0a0"/><rect x="625" y="41" width="2" height="1" fill="#a0a0a0"/><rect x="627" y="41" width="1" height="1" fill="#a0a0a0"/><rect x="633" y="41" width="1" height="1" fill="#a0a0a0"/><rect x="620" y="42" width="1" height="1" fill="#a0a0a0"/><rect x="621" y="42" width="2" height="1" fill="#a0a0a0"/><rect x="623" y="42" width="1" height="1" fill="#a0a0a0"/><rect x="625" y="42" width="1" height="1" fill="#a0a0a0"/><rect x="626" y="42" width="2" height="1" fill="#a0a0a0"/><rect x="628" y="42" width="1" height="1" fill="#a0a0a0"/><rect x="632" y="42" width="1" height="1" fill="#a0a0a0"/><rect x="633" y="42" width="1" height="1" fill="#a0a0a0"/><rect x="634" y="42" width="1" height="1" fill="#a0a0a0"/><rect x="619" y="43" width="1" height="1" fill="#a0a0a0"/><rect x="620" y="43" width="2" height="1" fill="#a0a0a0"/><rect x="622" y="43" width="1" height="1" fill="#a0a0a0"/><rect x="626" y="43" width="1" height="1" fill="#a0a0a0"/><rect x="627" y="43" width="2" height="1" fill="#a0a0a0"/><rect x="629" y="43" width="1" height="1" fill="#a0a0a0"/><rect x="631" y="43" width="1" height="1" fill="#a0a0a0"/><rect x="632" y="43" width="2" height="1" fill="#a0a0a0"/><rect x="634" y="43" width="1" height="1" fill="#a0a0a0"/><rect x="619" y="44" width="1" height="1" fill="#a0a0a0"/><rect x="620" y="44" width="1" height="1" fill="#a0a0a0"/><rect x="621" y="44" width="1" height="1" fill="#a0a0a0"/><rect x="627" y="44" width="1" height="1" fill="#a0a0a0"/><rect x="628" y="44" width="2" height="1" fill="#a0a0a0"/><rect x="630" y="44" width="1" height="1" fill="#a0a0a0"/><rect x="631" y="44" width="2" height="1" fill="#a0a0a0"/><rect x="633" y="44" width="1" height="1" fill="#a0a0a0"/><rect x="620" y="45" width="1" height="1" fill="#a0a0a0"/><rect x="628" y="45" width="1" height="1" fill="#a0a0a0"/><rect x="629" y="45" width="3" height="1" fill="#a0a0a0"/><rect x="632" y="45" width="1" height="1" fill="#a0a0a0"/><rect x="629" y="46" width="3" height="1" fill="#a0a0a0"/>
<rect x="621" y="47" width="2" height="1" fill="#a0a0a0"/><rect x="621" y="48" width="2" height="1" fill="#a0a0a0"/><rect x="628" y="48" width="2" height="1" fill="#a0a0a0"/><rect x="621" y="49" width="2" height="1" fill="#a0a0a0"/><rect x="629" y="49" width="2" height="1" fill="#a0a0a0"/><rect x="621" y="50" width="11" height="1" fill="#a0a0a0"/><rect x="621" y="51" width="10" height="1" fill="#a0a0a0"/><rect x="628" y="52" width="2" height="1" fill="#a0a0a0"/>
<rect x="642" y="40" width="16" height="1" fill="#ff0000"/><rect x="642" y="51" width="16" height="1" fill="#ff0000"/>
<rect x="646" y="42" width="3" height="1" fill="#000"/><rect x="645" y="43" width="1" height="1" fill="#000"/><rect x="646" y="43" width="3" height="1" fill="#00ff00"/><rect x="649" y="43" width="1" height="1" fill="#000"/><rect x="644" y="44" width="1" height="1" fill="#000"/><rect x="645" y="44" width="2" height="1" fill="#00ff00"/><rect x="647" y="44" width="1" height="1" fill="#000"/><rect x="648" y="44" width="2" height="1" fill="#00ff00"/><rect x="650" y="44" width="1" height="1" fill="#000"/><rect x="656" y="44" width="1" height="1" fill="#000"/><rect x="643" y="45" width="1" height="1" fill="#000"/><rect x="644" y="45" width="2" height="1" fill="#00ff00"/><rect x="646" y="45" width="1" height="1" fill="#000"/><rect x="648" y="45" width="1" height="1" fill="#000"/><rect x="649" y="45" width="2" height="1" fill="#00ff00"/><rect x="651" y="45" width="1" height="1" fill="#000"/><rect x="655" y="45" width="1" height="1" fill="#000"/><rect x="656" y="45" width="1" height="1" fill="#00ff00"/><rect x="657" y="45" width="1" height="1" fill="#000"/><rect x="642" y="46" width="1" height="1" fill="#000"/><rect x="643" y="46" width="2" height="1" fill="#00ff00"/><rect x="645" y="46" width="1" height="1" fill="#000"/><rect x="649" y="46" width="1" height="1" fill="#000"/><rect x="650" y="46" width="2" height="1" fill="#00ff00"/><rect x="652" y="46" width="1" height="1" fill="#000"/><rect x="654" y="46" width="1" height="1" fill="#000"/><rect x="655" y="46" width="2" height="1" fill="#00ff00"/><rect x="657" y="46" width="1" height="1" fill="#000"/><rect x="642" y="47" width="1" height="1" fill="#000"/><rect x="643" y="47" width="1" height="1" fill="#00ff00"/><rect x="644" y="47" width="1" height="1" fill="#000"/><rect x="650" y="47" width="1" height="1" fill="#000"/><rect x="651" y="47" width="2" height="1" fill="#00ff00"/><rect x="653" y="47" width="1" height="1" fill="#000"/><rect x="654" y="47" width="2" height="1" fill="#00ff00"/><rect x="656" y="47" width="1" height="1" fill="#000"/><rect x="643" y="48" width="1" height="1" fill="#000"/><rect x="651" y="48" width="1" height="1" fill="#000"/><rect x="652" y="48" width="3" height="1" fill="#00ff00"/><rect x="655" y="48" width="1" height="1" fill="#000"/><rect x="652" y="49" width="3" height="1" fill="#000"/>
<rect x="667" y="39" width="2" height="1" fill="#0000ff"/><rect x="674" y="39" width="1" height="1" fill="#000080"/><rect x="678" y="39" width="1" height="1" fill="#000080"/><rect x="667" y="40" width="1" height="1" fill="#0000ff"/><rect x="669" y="40" width="1" height="1" fill="#0000ff"/><rect x="673" y="40" width="2" height="1" fill="#000080"/><rect x="678" y="40" width="2" height="1" fill="#000080"/><rect x="667" y="41" width="1" height="1" fill="#0000ff"/><rect x="669" y="41" width="1" height="1" fill="#0000ff"/><rect x="672" y="41" width="9" height="1" fill="#000080"/><rect x="667" y="42" width="1" height="1" fill="#0000ff"/><rect x="669" y="42" width="1" height="1" fill="#008000"/><rect x="670" y="42" width="1" height="1" fill="#0000ff"/><rect x="673" y="42" width="2" height="1" fill="#000080"/><rect x="678" y="42" width="2" height="1" fill="#000080"/><rect x="667" y="43" width="1" height="1" fill="#0000ff"/><rect x="669" y="43" width="1" height="1" fill="#008000"/><rect x="671" y="43" width="1" height="1" fill="#0000ff"/><rect x="674" y="43" width="1" height="1" fill="#000080"/><rect x="678" y="43" width="1" height="1" fill="#000080"/><rect x="667" y="44" width="1" height="1" fill="#0000ff"/><rect x="669" y="44" width="1" height="1" fill="#008000"/><rect x="671" y="44" width="1" height="1" fill="#0000ff"/><rect x="667" y="45" width="1" height="1" fill="#0000ff"/><rect x="669" y="45" width="2" height="1" fill="#008000"/><rect x="672" y="45" width="1" height="1" fill="#0000ff"/><rect x="667" y="46" width="1" height="1" fill="#0000ff"/><rect x="669" y="46" width="2" height="1" fill="#008000"/><rect x="672" y="46" width="1" height="1" fill="#008000"/><rect x="673" y="46" width="1" height="1" fill="#0000ff"/><rect x="665" y="47" width="3" height="1" fill="#0000ff"/><rect x="669" y="47" width="4" height="1" fill="#008000"/><rect x="674" y="47" width="6" height="1" fill="#0000ff"/><rect x="666" y="48" width="14" height="1" fill="#008000"/><rect x="669" y="49" width="2" height="1" fill="#008000"/><rect x="672" y="49" width="1" height="1" fill="#008000"/><rect x="669" y="50" width="1" height="1" fill="#008000"/><rect x="669" y="51" width="1" height="1" fill="#008000"/></svg>
<div class="abs" style="left:195.5px;top:38px;width:16px;height:15px;overflow:hidden;font-size:7px;line-height:6.1px;color:#000;-webkit-text-stroke:0.12px #000;letter-spacing:0.1px;white-space:pre">3.25<br>5.60<br>7.00</div>
<div class="abs" style="left:565.2px;top:45.5px;width:18px;height:9px;font-size:8.4px;line-height:9px;color:#ff0000;-webkit-text-stroke:0.18px #ff0000;letter-spacing:-0.1px;white-space:pre">0.00</div>
<div id="chartedge"></div>
<div class="abs" style="left:9px;top:60px;width:1320px;height:1px;background:#a0a0a0"></div>
<div class="abs" style="left:9px;top:60px;width:1px;height:671px;background:#a0a0a0"></div>
<div class="abs" style="left:10px;top:61px;width:1319px;height:1px;background:#696969"></div>
<div class="abs" style="left:10px;top:61px;width:1px;height:664px;background:#696969"></div>
<div class="abs" style="left:9px;top:727px;width:1320px;height:3px;background:#f0f0f0"></div>
<div class="abs" style="left:9px;top:730px;width:1320px;height:1px;background:#a0a0a0"></div>
<div class="abs" style="left:9px;top:731px;width:1320px;height:1px;background:#696969"></div>
<div id="chart"></div>
<svg class="abs" style="left:0;top:0" width="1339" height="740" viewBox="0 0 1339 740" shape-rendering="crispEdges">
<rect x="16" y="97" width="7" height="585" fill="#808080"/>
<rect x="16" y="375" width="7" height="29" fill="#ffff00"/>
<rect x="16" y="375" width="1" height="29" fill="#fff"/><rect x="16" y="375" width="7" height="1" fill="#f4f4e0"/>
<rect x="22" y="376" width="1" height="28" fill="#404060"/><rect x="17" y="403" width="6" height="1" fill="#404060"/>
<line x1="90" x2="1312" y1="97.5" y2="97.5" stroke="#adadad" stroke-width="1" stroke-dasharray="5 3"/><line x1="84" x2="90" y1="97.5" y2="97.5" stroke="#adadad" stroke-width="1"/>
<line x1="90" x2="1312" y1="146.5" y2="146.5" stroke="#adadad" stroke-width="1" stroke-dasharray="5 3"/><line x1="84" x2="90" y1="146.5" y2="146.5" stroke="#adadad" stroke-width="1"/>
<line x1="90" x2="1312" y1="195.5" y2="195.5" stroke="#adadad" stroke-width="1" stroke-dasharray="5 3"/><line x1="84" x2="90" y1="195.5" y2="195.5" stroke="#adadad" stroke-width="1"/>
<line x1="90" x2="1312" y1="244.5" y2="244.5" stroke="#adadad" stroke-width="1" stroke-dasharray="5 3"/><line x1="84" x2="90" y1="244.5" y2="244.5" stroke="#adadad" stroke-width="1"/>
<line x1="90" x2="1312" y1="292.5" y2="292.5" stroke="#adadad" stroke-width="1" stroke-dasharray="5 3"/><line x1="84" x2="90" y1="292.5" y2="292.5" stroke="#adadad" stroke-width="1"/>
<line x1="90" x2="1312" y1="341.5" y2="341.5" stroke="#adadad" stroke-width="1" stroke-dasharray="5 3"/><line x1="84" x2="90" y1="341.5" y2="341.5" stroke="#adadad" stroke-width="1"/>
<line x1="90" x2="1312" y1="390.5" y2="390.5" stroke="#adadad" stroke-width="1" stroke-dasharray="5 3"/><line x1="84" x2="90" y1="390.5" y2="390.5" stroke="#adadad" stroke-width="1"/>
<line x1="90" x2="1312" y1="439.5" y2="439.5" stroke="#adadad" stroke-width="1" stroke-dasharray="5 3"/><line x1="84" x2="90" y1="439.5" y2="439.5" stroke="#adadad" stroke-width="1"/>
<line x1="90" x2="1312" y1="487.5" y2="487.5" stroke="#adadad" stroke-width="1" stroke-dasharray="5 3"/><line x1="84" x2="90" y1="487.5" y2="487.5" stroke="#adadad" stroke-width="1"/>
<line x1="90" x2="1312" y1="536.5" y2="536.5" stroke="#adadad" stroke-width="1" stroke-dasharray="5 3"/><line x1="84" x2="90" y1="536.5" y2="536.5" stroke="#adadad" stroke-width="1"/>
<line x1="90" x2="1312" y1="585.5" y2="585.5" stroke="#adadad" stroke-width="1" stroke-dasharray="5 3"/><line x1="84" x2="90" y1="585.5" y2="585.5" stroke="#adadad" stroke-width="1"/>
<line x1="90" x2="1312" y1="634.5" y2="634.5" stroke="#adadad" stroke-width="1" stroke-dasharray="5 3"/><line x1="84" x2="90" y1="634.5" y2="634.5" stroke="#adadad" stroke-width="1"/>
<line x1="84" x2="1314" y1="682.5" y2="682.5" stroke="#a2a2a2" stroke-width="1"/>
<line x1="89.5" x2="89.5" y1="97" y2="688" stroke="#a2a2a2" stroke-width="1"/>
<line x1="161.5" x2="161.5" y1="99" y2="682" stroke="#adadad" stroke-width="1" stroke-dasharray="3 1"/>
<line x1="212.5" x2="212.5" y1="99" y2="682" stroke="#adadad" stroke-width="1" stroke-dasharray="3 1"/>
<line x1="252.5" x2="252.5" y1="99" y2="682" stroke="#adadad" stroke-width="1" stroke-dasharray="3 1"/>
<line x1="284.5" x2="284.5" y1="99" y2="682" stroke="#adadad" stroke-width="1" stroke-dasharray="3 1"/>
<line x1="312.5" x2="312.5" y1="99" y2="682" stroke="#adadad" stroke-width="1" stroke-dasharray="3 1"/>
<line x1="335.5" x2="335.5" y1="99" y2="682" stroke="#adadad" stroke-width="1" stroke-dasharray="3 1"/>
<line x1="356.5" x2="356.5" y1="99" y2="682" stroke="#adadad" stroke-width="1" stroke-dasharray="3 1"/>
<line x1="496.5" x2="496.5" y1="99" y2="682" stroke="#adadad" stroke-width="1" stroke-dasharray="3 1"/>
<line x1="568.5" x2="568.5" y1="99" y2="682" stroke="#adadad" stroke-width="1" stroke-dasharray="3 1"/>
<line x1="619.5" x2="619.5" y1="99" y2="682" stroke="#adadad" stroke-width="1" stroke-dasharray="3 1"/>
<line x1="659.5" x2="659.5" y1="99" y2="682" stroke="#adadad" stroke-width="1" stroke-dasharray="3 1"/>
<line x1="691.5" x2="691.5" y1="99" y2="682" stroke="#adadad" stroke-width="1" stroke-dasharray="3 1"/>
<line x1="719.5" x2="719.5" y1="99" y2="682" stroke="#adadad" stroke-width="1" stroke-dasharray="3 1"/>
<line x1="742.5" x2="742.5" y1="99" y2="682" stroke="#adadad" stroke-width="1" stroke-dasharray="3 1"/>
<line x1="763.5" x2="763.5" y1="99" y2="682" stroke="#adadad" stroke-width="1" stroke-dasharray="3 1"/>
<line x1="904.5" x2="904.5" y1="99" y2="682" stroke="#adadad" stroke-width="1" stroke-dasharray="3 1"/>
<line x1="976.5" x2="976.5" y1="99" y2="682" stroke="#adadad" stroke-width="1" stroke-dasharray="3 1"/>
<line x1="1027.5" x2="1027.5" y1="99" y2="682" stroke="#adadad" stroke-width="1" stroke-dasharray="3 1"/>
<line x1="1067.5" x2="1067.5" y1="99" y2="682" stroke="#adadad" stroke-width="1" stroke-dasharray="3 1"/>
<line x1="1099.5" x2="1099.5" y1="99" y2="682" stroke="#adadad" stroke-width="1" stroke-dasharray="3 1"/>
<line x1="1127.5" x2="1127.5" y1="99" y2="682" stroke="#adadad" stroke-width="1" stroke-dasharray="3 1"/>
<line x1="1150.5" x2="1150.5" y1="99" y2="682" stroke="#adadad" stroke-width="1" stroke-dasharray="3 1"/>
<line x1="1171.5" x2="1171.5" y1="99" y2="682" stroke="#adadad" stroke-width="1" stroke-dasharray="3 1"/>
<line x1="374.5" x2="374.5" y1="101" y2="683" stroke="#adadad" stroke-width="1" stroke-dasharray="5 3"/><rect x="374" y="684" width="1" height="4" fill="#adadad"/>
<line x1="782.5" x2="782.5" y1="101" y2="683" stroke="#adadad" stroke-width="1" stroke-dasharray="5 3"/><rect x="782" y="684" width="1" height="4" fill="#adadad"/>
<line x1="1191.5" x2="1191.5" y1="101" y2="683" stroke="#adadad" stroke-width="1" stroke-dasharray="5 3"/><rect x="1191" y="684" width="1" height="4" fill="#adadad"/>
<line x1="1313.5" x2="1313.5" y1="99" y2="682" stroke="#adadad" stroke-width="1" stroke-dasharray="3 1"/>
<line x1="1314.5" x2="1314.5" y1="101" y2="683" stroke="#adadad" stroke-width="1" stroke-dasharray="5 3"/><rect x="1314" y="684" width="1" height="4" fill="#adadad"/>
<polyline fill="none" stroke="#ff00ff" stroke-width="1" points="89.5,577.5 170.5,417.5 252.5,390.5"/>
<rect x="252" y="390" width="41" height="1" fill="#ff00ff"/>
<rect x="293" y="389" width="41" height="1" fill="#ff00ff"/>
<rect x="334" y="390" width="41" height="1" fill="#ff00ff"/>
<rect x="375" y="391" width="81" height="1" fill="#ff00ff"/>
<rect x="456" y="390" width="715" height="1" fill="#ff00ff"/>
<rect x="1171" y="391" width="20" height="1" fill="#ff00ff"/>
<rect x="1191" y="392" width="21" height="1" fill="#ff00ff"/>
<rect x="1212" y="393" width="20" height="1" fill="#ff00ff"/>
<rect x="1232" y="394" width="11" height="1" fill="#ff00ff"/>
<rect x="1243" y="395" width="10" height="1" fill="#ff00ff"/>
<rect x="1253" y="396" width="10" height="1" fill="#ff00ff"/>
<rect x="1263" y="397" width="10" height="1" fill="#ff00ff"/>
<rect x="1273" y="398" width="7" height="1" fill="#ff00ff"/>
<rect x="1280" y="399" width="7" height="1" fill="#ff00ff"/>
<rect x="1287" y="400" width="7" height="1" fill="#ff00ff"/>
<rect x="1294" y="401" width="7" height="1" fill="#ff00ff"/>
<rect x="1301" y="402" width="7" height="1" fill="#ff00ff"/>
<rect x="1308" y="403" width="5" height="1" fill="#ff00ff"/>
<polyline fill="none" stroke="#ffff00" stroke-width="1" points="89.5,580.5 170.5,419.5 252.5,390.5"/>
<rect x="252" y="390" width="735" height="1" fill="#ffff00"/>
<rect x="987" y="391" width="80" height="1" fill="#ffff00"/>
<rect x="1067" y="392" width="63" height="1" fill="#ffff00"/>
<rect x="1130" y="393" width="20" height="1" fill="#ffff00"/>
<rect x="1150" y="394" width="41" height="1" fill="#ffff00"/>
<rect x="1191" y="395" width="14" height="1" fill="#ffff00"/>
<rect x="1205" y="396" width="14" height="1" fill="#ffff00"/>
<rect x="1219" y="397" width="13" height="1" fill="#ffff00"/>
<rect x="1232" y="398" width="14" height="1" fill="#ffff00"/>
<rect x="1246" y="399" width="14" height="1" fill="#ffff00"/>
<rect x="1260" y="400" width="13" height="1" fill="#ffff00"/>
<rect x="1273" y="401" width="7" height="1" fill="#ffff00"/>
<rect x="1280" y="402" width="7" height="1" fill="#ffff00"/>
<rect x="1287" y="403" width="7" height="1" fill="#ffff00"/>
<rect x="1294" y="404" width="7" height="1" fill="#ffff00"/>
<rect x="1301" y="405" width="7" height="1" fill="#ffff00"/>
<rect x="1308" y="406" width="5" height="1" fill="#ffff00"/>
<rect x="89" y="713" width="1225" height="7" fill="#ffff00"/><rect x="89" y="713" width="1225" height="1" fill="#ffffe0"/><rect x="89" y="713" width="1" height="7" fill="#ffffe0"/><rect x="90" y="719" width="1224" height="1" fill="#404060"/><rect x="1313" y="714" width="1" height="6" fill="#404060"/>
</svg>
<div class="yl" style="top:91px">10.00</div>
<div class="yl" style="top:140px">8.33</div>
<div class="yl" style="top:189px">6.67</div>
<div class="yl" style="top:238px">5.00</div>
<div class="yl" style="top:286px">3.33</div>
<div class="yl" style="top:335px">1.67</div>
<div class="yl" style="top:384px">0.00</div>
<div class="yl" style="top:433px"><span style="display:inline-block;transform:scaleX(1.45);transform-origin:100% 50%;margin-left:2px">-</span>1.67</div>
<div class="yl" style="top:481px"><span style="display:inline-block;transform:scaleX(1.45);transform-origin:100% 50%;margin-left:2px">-</span>3.33</div>
<div class="yl" style="top:530px"><span style="display:inline-block;transform:scaleX(1.45);transform-origin:100% 50%;margin-left:2px">-</span>5.00</div>
<div class="yl" style="top:579px"><span style="display:inline-block;transform:scaleX(1.45);transform-origin:100% 50%;margin-left:2px">-</span>6.67</div>
<div class="yl" style="top:628px"><span style="display:inline-block;transform:scaleX(1.45);transform-origin:100% 50%;margin-left:2px">-</span>8.33</div>
<div class="yl" style="top:676px"><span style="display:inline-block;transform:scaleX(1.45);transform-origin:100% 50%;margin-left:2px">-</span>10.00</div>
<div class="yl" style="top:75px;font-size:10.5px;letter-spacing:1.1px">dBr</div>
<div class="xl" style="left:89px">20.00 Hz</div>
<div class="xl xc" style="left:324px;width:100px;text-align:center">100.00</div>
<div class="xl xc" style="left:732px;width:100px;text-align:center">1000.00</div>
<div class="xl xc" style="left:1141px;width:100px;text-align:center">10000.00</div>
<div class="xl" style="right:25px;text-align:right">20000.00</div>
<div id="info"></div>
<div id="infoL"></div>
<div class="abs" style="left:0;top:740px;width:1339px;height:1px;background:#77774a"></div>
<div class="abs" id="ih" style="left:6.3px;top:745px;height:16px;line-height:16px;font-weight:bold;font-size:13.2px;color:#1616b8;white-space:pre">Info Audiovintage.fr</div>
<div class="abs" style="left:6px;top:763px;width:1328px;height:1px;background:#000"></div>
<div class="il" id="il0" style="top:769px;letter-spacing:0.375px">Référence 1watt sous 8 ohms à 1khz, 0dBr</div>
<div class="il" id="il1" style="top:785px;letter-spacing:0.29px">Trait jaune = canal gauche</div>
<div class="il" id="il2" style="top:801px;letter-spacing:0.26px">Trait violet = canal droit</div>
<svg class="abs" style="left:1300px;top:742px" width="39" height="91" viewBox="1300 742 39 91">
<g shape-rendering="crispEdges"><rect x="1306" y="758" width="12" height="1" fill="#000"/></g>
<path d="M1322.5 747.5 L1333.5 758.5 M1333.5 747.5 L1322.5 758.5" stroke="#000" stroke-width="1.1" fill="none"/>
<g shape-rendering="crispEdges" fill="#000"><rect x="1324" y="832" width="1" height="1"/><rect x="1325" y="831" width="1" height="1"/><rect x="1326" y="830" width="1" height="1"/><rect x="1327" y="829" width="1" height="1"/><rect x="1328" y="828" width="1" height="1"/><rect x="1329" y="827" width="1" height="1"/><rect x="1330" y="826" width="1" height="1"/><rect x="1331" y="825" width="1" height="1"/><rect x="1332" y="824" width="1" height="1"/><rect x="1333" y="823" width="1" height="1"/><rect x="1334" y="822" width="1" height="1"/><rect x="1335" y="821" width="1" height="1"/><rect x="1336" y="820" width="1" height="1"/><rect x="1337" y="819" width="1" height="1"/><rect x="1338" y="818" width="1" height="1"/><rect x="1329" y="832" width="1" height="1"/><rect x="1330" y="831" width="1" height="1"/><rect x="1331" y="830" width="1" height="1"/><rect x="1332" y="829" width="1" height="1"/><rect x="1333" y="828" width="1" height="1"/><rect x="1334" y="827" width="1" height="1"/><rect x="1335" y="826" width="1" height="1"/><rect x="1336" y="825" width="1" height="1"/><rect x="1337" y="824" width="1" height="1"/><rect x="1338" y="823" width="1" height="1"/><rect x="1334" y="832" width="1" height="1"/><rect x="1335" y="831" width="1" height="1"/><rect x="1336" y="830" width="1" height="1"/><rect x="1337" y="829" width="1" height="1"/><rect x="1338" y="828" width="1" height="1"/></g>
</svg>
<div id="pop">
<div class="abs" style="left:0;top:0;width:308px;height:27px;background:#f3f3f3"></div>
<svg class="abs" style="left:3px;top:6px" width="15" height="13" viewBox="0 0 15 13"><defs><linearGradient id="pg" x1="0" y1="0" x2="0.3" y2="1"><stop offset="0" stop-color="#5b86c4"/><stop offset="0.5" stop-color="#3f9088"/><stop offset="1" stop-color="#4cae5c"/></linearGradient><linearGradient id="pg3" x1="0" y1="0" x2="0" y2="1"><stop offset="0" stop-color="#7aa4d6"/><stop offset="1" stop-color="#c4e8b8"/></linearGradient></defs><rect x="0.5" y="0.5" width="14" height="12" rx="1.2" fill="#fff" stroke="#b6bac2"/><rect x="1" y="1" width="13" height="1" fill="#dfe3ea"/><rect x="2" y="3" width="5" height="8" fill="url(#pg)"/><rect x="9" y="3" width="2" height="8" fill="#e6e6e6"/><rect x="12" y="3" width="2" height="5" fill="url(#pg3)"/></svg>
<div class="abs" id="pt" style="left:25px;top:4.6px;height:18px;line-height:18px;font-size:13.3px;color:#9b9b9b;white-space:pre">Generator Sweep Equ...</div>
<svg class="abs" style="left:180px;top:0" width="128" height="27" viewBox="0 0 128 27"><path d="M9 13.5 H19" stroke="#8a8a8a" stroke-width="1"/><rect x="54.5" y="8.5" width="9" height="9" rx="1" fill="none" stroke="#dcdcdc" stroke-width="1"/><path d="M100.3 8.3 L109.7 17.7 M109.7 8.3 L100.3 17.7" stroke="#8a8a8a" stroke-width="1.1" fill="none"/></svg>
<div class="abs" id="ps" style="left:8px;top:31px;height:16px;line-height:16px;font-size:11px;letter-spacing:-0.15px;color:#000;white-space:pre">Select a saved reference trace and press go to run the sweep</div>
<div class="abs" style="left:3px;top:52px;width:250px;height:21px;box-sizing:border-box;background:#fff;border:1px solid #dcdcdc;border-bottom-color:#9a9a9a;border-radius:2px"></div>
<div class="abs" id="pr" style="left:7px;top:54.7px;height:16px;line-height:16px;font-size:11px;letter-spacing:-0.15px;color:#000;white-space:pre">riaa</div>
<svg class="abs" style="left:238px;top:58px" width="12" height="10" viewBox="0 0 12 10"><path d="M2 2.8 L6 6.8 L10 2.8" fill="none" stroke="#555" stroke-width="1.1"/></svg>
<div class="abs" style="left:256px;top:52px;width:47px;height:23px;box-sizing:border-box;background:#f0f0f0;border:1px solid #3c3c3c;box-shadow:inset 0 0 0 1px #fff"></div>
<div class="abs" id="pg2" style="left:256px;top:56px;width:47px;text-align:center;height:16px;line-height:16px;font-size:11px;color:#000;white-space:pre">Go</div>
</div>
<div id="botline"></div>
</body>
</html>
